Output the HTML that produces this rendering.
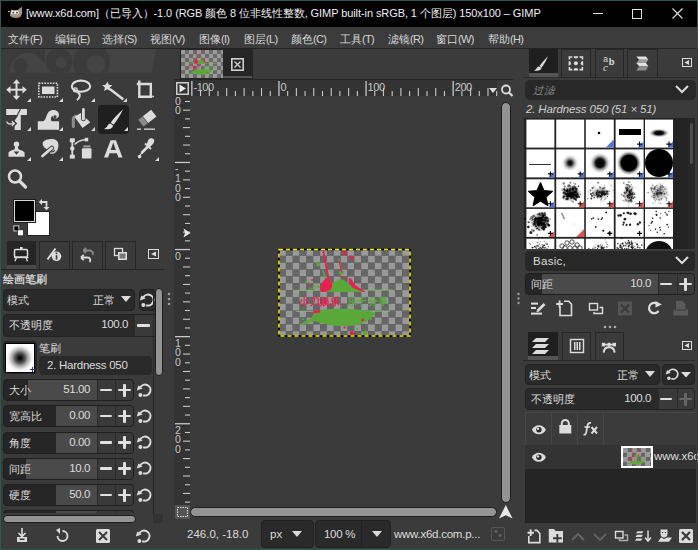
<!DOCTYPE html>
<html><head><meta charset="utf-8"><style>
*{margin:0;padding:0;box-sizing:border-box}
html,body{width:698px;height:550px;overflow:hidden;background:#3b3b3b;font-family:"Liberation Sans",sans-serif;color:#dcdcdc;font-size:12px}
div,svg{position:absolute}
.t{white-space:nowrap;line-height:1}
</style></head><body>
<div style="left:0px;top:0px;width:698px;height:550px;background:#2a5852"></div>
<div style="left:1px;top:1px;width:696px;height:548px;background:#3b3b3b"></div>
<div style="left:1px;top:1px;width:696px;height:26px;background:#000"></div>
<div style="left:1px;top:27px;width:696px;height:21px;background:#3c3c3c"></div>
<div style="left:1px;top:48px;width:696px;height:1px;background:#232323"></div>
<svg style="left:0px;top:0px;" width="30" height="27" viewBox="0 0 30 27"><path d="M10 14.5 L11.2 9.3 L13.3 10.3 L17.5 10 L21.8 6.8 L22.2 13 L20.5 16.8 L17 18 L12.5 17.6 L10 15.8 Z" fill="#a0968a"/><ellipse cx="13.2" cy="12.4" rx="2.2" ry="1.9" fill="#f0f0f0"/><ellipse cx="16.6" cy="12.4" rx="2.2" ry="1.9" fill="#f0f0f0"/><circle cx="13.4" cy="12.6" r="0.9" fill="#222"/><circle cx="17" cy="12.6" r="0.9" fill="#222"/><ellipse cx="8.9" cy="11.5" rx="1" ry="0.7" fill="#ccc"/><circle cx="18.3" cy="16.4" r="1.1" fill="#e07a20"/></svg>
<div class="t" style="left:26px;top:8px;font-size:11px;color:#f0f0f0;letter-spacing:-0.08px">[www.x6d.com]（已导入）-1.0 (RGB 颜色 8 位非线性整数, GIMP built-in sRGB, 1 个图层) 150x100 – GIMP</div>
<div style="left:593px;top:13px;width:10px;height:1px;background:#e0e0e0"></div>
<div style="left:632px;top:9px;width:10px;height:10px;border:1px solid #e0e0e0"></div>
<svg style="left:672px;top:8px;" width="11" height="11" viewBox="0 0 11 11"><path d="M0.5 0.5 L10.5 10.5 M10.5 0.5 L0.5 10.5" stroke="#e0e0e0" stroke-width="1.1"/></svg>
<div class="t" style="left:8px;top:33px;color:#d6d6d6"><span style="font-size:10.6px">文件</span><span style="font-size:11px;letter-spacing:-0.7px">(F)</span></div>
<div class="t" style="left:55px;top:33px;color:#d6d6d6"><span style="font-size:10.6px">编辑</span><span style="font-size:11px;letter-spacing:-0.7px">(E)</span></div>
<div class="t" style="left:102px;top:33px;color:#d6d6d6"><span style="font-size:10.6px">选择</span><span style="font-size:11px;letter-spacing:-0.7px">(S)</span></div>
<div class="t" style="left:150px;top:33px;color:#d6d6d6"><span style="font-size:10.6px">视图</span><span style="font-size:11px;letter-spacing:-0.7px">(V)</span></div>
<div class="t" style="left:199px;top:33px;color:#d6d6d6"><span style="font-size:10.6px">图像</span><span style="font-size:11px;letter-spacing:-0.7px">(I)</span></div>
<div class="t" style="left:244px;top:33px;color:#d6d6d6"><span style="font-size:10.6px">图层</span><span style="font-size:11px;letter-spacing:-0.7px">(L)</span></div>
<div class="t" style="left:291px;top:33px;color:#d6d6d6"><span style="font-size:10.6px">颜色</span><span style="font-size:11px;letter-spacing:-0.7px">(C)</span></div>
<div class="t" style="left:340px;top:33px;color:#d6d6d6"><span style="font-size:10.6px">工具</span><span style="font-size:11px;letter-spacing:-0.7px">(T)</span></div>
<div class="t" style="left:388px;top:33px;color:#d6d6d6"><span style="font-size:10.6px">滤镜</span><span style="font-size:11px;letter-spacing:-0.7px">(R)</span></div>
<div class="t" style="left:436px;top:33px;color:#d6d6d6"><span style="font-size:10.6px">窗口</span><span style="font-size:11px;letter-spacing:-0.7px">(W)</span></div>
<div class="t" style="left:488px;top:33px;color:#d6d6d6"><span style="font-size:10.6px">帮助</span><span style="font-size:11px;letter-spacing:-0.7px">(H)</span></div>
<svg style="left:0px;top:49px;" width="172" height="24" viewBox="0 0 172 24">
<defs><clipPath id="wb"><rect x="0" y="49" width="172" height="23.8"/></clipPath></defs>
<g clip-path="url(#wb)" transform="translate(0,-49)">
<path d="M45 49 L156.2 49 L151.6 73 L45 73 Z" fill="#444"/>
<path d="M9.5 73 C9.5 60 18 53 28 53 C37 53 45 60 48 73 Z" fill="#444"/>
<ellipse cx="20.6" cy="66" rx="6.8" ry="8" fill="#3b3b3b"/>
<circle cx="59" cy="62" r="13.3" fill="#3b3b3b"/><circle cx="61" cy="62.5" r="5.5" fill="#444"/>
<circle cx="91.5" cy="62" r="18.5" fill="#3b3b3b"/><circle cx="96" cy="64" r="9.3" fill="#444"/>
</g></svg>
<div style="left:98px;top:105px;width:31px;height:29px;background:#1f1f1f;border-radius:4px"></div>
<svg style="left:0;top:0" width="698" height="550" viewBox="0 0 698 550">
<g fill="#dcdcdc" stroke="none">
<rect x="9" y="88.7" width="15" height="2"/><rect x="15.5" y="82" width="2" height="15.5"/>
<path d="M6.2 89.7 L10.5 86 L10.5 93.4 Z M26.8 89.7 L22.5 86 L22.5 93.4 Z M16.5 79.3 L12.8 83.6 L20.2 83.6 Z M16.5 100.1 L12.8 95.8 L20.2 95.8 Z"/>
<path d="M27 102 L31 102 L31 98 Z" fill="#dcdcdc"/>
<rect x="42" y="86.5" width="12.5" height="7.5"/>
</g>
<rect x="38.8" y="83.2" width="18.6" height="13.8" fill="none" stroke="#dcdcdc" stroke-width="1.6" stroke-dasharray="1.6 1.2"/>
<path d="M59 102 L63 102 L63 98 Z" fill="#dcdcdc"/>
<ellipse cx="81" cy="86.2" rx="9.2" ry="5.6" fill="none" stroke="#dcdcdc" stroke-width="2.1"/>
<path d="M75 90.5 C78.5 92 80.5 94.5 79.5 97 C79 98.5 78 99.5 76.8 100" fill="none" stroke="#dcdcdc" stroke-width="2"/>
<circle cx="75.3" cy="89.8" r="1.9" fill="none" stroke="#dcdcdc" stroke-width="1.4"/>
<path d="M91 102 L95 102 L95 98 Z" fill="#dcdcdc"/>
<path d="M107.3 81.5 L108.8 84.8 L112.4 85.2 L109.7 87.6 L110.5 91.1 L107.3 89.3 L104.1 91.1 L104.9 87.6 L102.2 85.2 L105.8 84.8 Z" fill="#dcdcdc"/>
<path d="M110.5 89.5 L122.5 98.8" stroke="#dcdcdc" stroke-width="2.4" stroke-linecap="round"/>
<path d="M123 102 L127 102 L127 98 Z" fill="#dcdcdc"/>
<path d="M139.3 80.6 V96.7 H152" fill="none" stroke="#dcdcdc" stroke-width="2.4"/><circle cx="153" cy="96.5" r="0.9" fill="#dcdcdc"/>
<path d="M136.8 84 H150.8 V98" fill="none" stroke="#dcdcdc" stroke-width="2.4"/>
<rect x="6.2" y="109" width="20.7" height="6" fill="#dcdcdc"/>
<path d="M20.6 108.5 L14.6 121" stroke="#3b3b3b" stroke-width="1.1"/>
<path d="M20.8 111.5 L20.8 130 L14.6 130 L14.6 126.2 L17.2 123.5 L14.6 120.8 Z" fill="#dcdcdc"/>
<path d="M6.8 121.5 C7 124 9 124.2 13.5 123.6" fill="none" stroke="#dcdcdc" stroke-width="1.4"/>
<path d="M11.8 121.3 L14.3 123.6 L11.8 125.9" fill="none" stroke="#dcdcdc" stroke-width="1.4"/>
<path d="M27 131 L31 131 L31 127 Z" fill="#dcdcdc"/>
<path fill-rule="evenodd" d="M37.8 129.8 V121.3 H42.5 C44.5 121.3 45.5 119 46.5 116 C48 111.5 50.5 110 53.5 110 C57 110 59 112.5 59 115 C59 117.5 57 118.8 55 118.5 C53.5 118.3 52.5 117 52.6 115.7 C51 116.5 50.5 118.5 51.5 121.3 H59.1 V129.8 Z M55 115.2 A1.6 1.6 0 1 0 55.01 115.2 Z" fill="#dcdcdc"/>
<path d="M59 131 L63 131 L63 127 Z" fill="#dcdcdc"/>
<path d="M73.3 126.5 V119.5 C73.3 117.5 74.5 116.5 76.5 116" fill="none" stroke="#8c8c8c" stroke-width="3" stroke-linecap="round"/>
<path d="M74.7 117.1 L80.7 113 L90.3 122.2 L82.5 128.1 Z" fill="#dcdcdc"/>
<path d="M83.4 109.5 V119" stroke="#3b3b3b" stroke-width="4.6" stroke-linecap="round"/>
<path d="M83.4 109.5 V119" stroke="#dcdcdc" stroke-width="2.8" stroke-linecap="round"/>
<path d="M91 131 L95 131 L95 127 Z" fill="#dcdcdc"/>
<path d="M123 109.5 C118.5 113 114 118 110.8 122.6 L113.6 124.8 C117 120 120.5 115 123 109.5 Z" fill="#dcdcdc"/>
<path d="M110.5 123.5 C107 124 108 127.5 104 129 C109 130 113 128.5 113 125.5 Z" fill="#dcdcdc"/>
<path d="M124 131 L128 131 L128 127 Z" fill="#dcdcdc"/>
<g transform="translate(147.5 118) rotate(-38)"><rect x="-2.5" y="-4.3" width="10.5" height="8.6" fill="#dcdcdc"/><rect x="-8.5" y="-4.3" width="5.5" height="8.6" fill="#8a8a8a"/></g>
<rect x="137" y="128.5" width="4" height="1.3" fill="#dcdcdc"/><rect x="144" y="128.5" width="11" height="1.3" fill="#dcdcdc"/>
<circle cx="16.5" cy="144.2" r="2.7" fill="#dcdcdc"/>
<path d="M8.5 156.7 V153 C8.5 150.8 12.5 150.3 14.6 149.2 L15.2 146 H17.8 L18.4 149.2 C20.5 150.3 24.6 150.8 24.6 153 V156.7 Z" fill="#dcdcdc"/>
<path d="M13.8 151.6 H19.2 L16.5 154.8 Z" fill="#3b3b3b"/>
<path d="M27 161 L31 161 L31 157 Z" fill="#dcdcdc"/>
<path d="M43 142 C45.5 139 53 138 56.5 140.5 C59.5 143 58.8 149 56 152 C54 154.2 50.5 154.5 48.8 152.5 L47.5 149.5 C45.5 148.5 43.5 147 42.8 145 C42.5 144 42.5 143 43 142 Z" fill="#dcdcdc"/>
<path d="M49 150.5 C50.5 152.5 53.5 152.5 54.8 150" fill="none" stroke="#3b3b3b" stroke-width="1.3"/>
<path d="M42.5 156 L51.8 148" stroke="#3b3b3b" stroke-width="4.6" stroke-linecap="round"/>
<path d="M42.5 156 L51.8 148" stroke="#dcdcdc" stroke-width="2.8" stroke-linecap="round"/>
<path d="M59 161 L63 161 L63 157 Z" fill="#dcdcdc"/>
<rect x="71.4" y="140" width="1.8" height="17" fill="#dcdcdc"/>
<rect x="69.8" y="138.3" width="5" height="4" fill="#dcdcdc"/>
<circle cx="72.3" cy="148.5" r="2.2" fill="#dcdcdc"/>
<rect x="69.8" y="154.8" width="5" height="3.8" fill="#dcdcdc"/>
<path d="M74.5 144.5 C77.5 141.5 81 140 85 139.8" fill="none" stroke="#dcdcdc" stroke-width="1.5"/>
<rect x="84.8" y="137.8" width="3.4" height="3.6" fill="#dcdcdc"/>
<rect x="83.3" y="145.3" width="7.2" height="2.2" fill="#9a9a9a"/>
<rect x="81.9" y="148.3" width="9.6" height="10.1" rx="1" fill="#dcdcdc"/>
<path fill-rule="evenodd" d="M104 157.5 L110.6 140.3 L115.9 140.3 L122.5 157.5 L118.4 157.5 L116.9 153.2 L109.6 153.2 L108.1 157.5 Z M110.7 149.9 L115.8 149.9 L113.25 142.6 Z" fill="#dcdcdc"/>
<path d="M148.5 139.5 C150.5 137.5 154 138 154.2 140.5 C154.4 142 153.5 143.5 152 145 L149.5 147.5 L146.5 144.5 Z" fill="#dcdcdc"/>
<path d="M145 143.5 L151 149" stroke="#dcdcdc" stroke-width="1.8"/>
<path d="M148 146.5 L141.5 153" stroke="#dcdcdc" stroke-width="2.6"/>
<path d="M142 152.5 L140 155.5" stroke="#dcdcdc" stroke-width="1.3"/>
<circle cx="139.6" cy="156.6" r="1.8" fill="#dcdcdc"/>
<path d="M155 161 L159 161 L159 157 Z" fill="#dcdcdc"/>
<circle cx="15" cy="176.5" r="6" fill="none" stroke="#dcdcdc" stroke-width="2.5"/>
<path d="M19.5 181 L25.5 187" stroke="#dcdcdc" stroke-width="3.2" stroke-linecap="round"/>
</svg>
<div style="left:27px;top:211px;width:23px;height:25px;background:#fff;border:1px solid #222"></div>
<div style="left:13.3px;top:199.4px;width:22.3px;height:24px;background:#000;border:1px solid #1c1c1c;box-shadow:inset 0 0 0 1px #d8d8d8, inset 0 0 0 2px #000"></div>
<svg style="left:12px;top:224px;" width="13" height="13" viewBox="0 0 13 13"><rect x="1.8" y="1.9" width="5" height="5" fill="#000" stroke="#d0d0d0" stroke-width="1"/><rect x="5.5" y="5.8" width="6" height="6" fill="#fff" stroke="#222" stroke-width="0.8"/></svg>
<svg style="left:38px;top:198px;" width="13" height="14" viewBox="0 0 13 14"><path d="M3 4 H8.5 V10" fill="none" stroke="#dcdcdc" stroke-width="1.8"/><path d="M0.8 4 L4 1 L4 7 Z M8.5 12.2 L5.5 9 L11.5 9 Z" fill="#dcdcdc"/></svg>
<div style="left:1px;top:269px;width:163px;height:1px;background:#242424"></div>
<div style="left:7px;top:241px;width:29px;height:28px;background:#252525"></div>
<div style="left:7px;top:265px;width:29px;height:4px;background:#4a4a4a"></div>
<div style="left:39px;top:241px;width:31px;height:28px;border:1px solid #282828;border-bottom:none"></div>
<div style="left:72px;top:241px;width:31px;height:28px;border:1px solid #282828;border-bottom:none"></div>
<div style="left:105px;top:241px;width:31px;height:28px;border:1px solid #282828;border-bottom:none"></div>
<svg style="left:0px;top:230px;" width="170" height="40" viewBox="0 0 170 40">
<rect x="14.5" y="19.6" width="13" height="7.4" rx="1.2" fill="none" stroke="#dcdcdc" stroke-width="1.5"/>
<rect x="20" y="17" width="2.6" height="2.6" fill="#dcdcdc"/>
<path d="M14 27.6 H28.5" stroke="#dcdcdc" stroke-width="1.2"/>
<path d="M16.5 27.5 L15 31.3 M26 27.5 L27.5 31.3" stroke="#dcdcdc" stroke-width="1.3"/>
<path d="M47.5 29.5 L55.5 18.5" stroke="#dcdcdc" stroke-width="2"/>
<circle cx="56.5" cy="26.3" r="4.8" fill="#dcdcdc"/>
<rect x="55.7" y="25.2" width="1.7" height="4.3" fill="#3b3b3b"/><rect x="55.7" y="22.6" width="1.7" height="1.6" fill="#3b3b3b"/>
<path d="M83.5 20.5 H89.5 C92.5 20.5 93.5 23 92.5 25" fill="none" stroke="#8a8a8a" stroke-width="1.8"/>
<path d="M83.5 20.5 L86 18 M83.5 20.5 L86 23" fill="none" stroke="#8a8a8a" stroke-width="1.8"/>
<path d="M81 27.5 H87.5 C90.5 27.5 91 30.5 89.5 32" fill="none" stroke="#dcdcdc" stroke-width="1.8"/>
<path d="M81 27.5 L83.8 24.8 M81 27.5 L83.8 30.2" fill="none" stroke="#dcdcdc" stroke-width="1.8"/>
<rect x="114.5" y="18.5" width="8" height="7" fill="none" stroke="#dcdcdc" stroke-width="1.3"/>
<rect x="118" y="22" width="9" height="8" fill="#dcdcdc"/><rect x="119.5" y="23.5" width="6" height="5" fill="#777"/>
<rect x="148.5" y="19.5" width="10" height="9" fill="none" stroke="#dcdcdc" stroke-width="1"/>
<path d="M156 21.5 L151 24 L156 26.5 Z" fill="#dcdcdc"/>
</svg>
<div class="t" style="left:3px;top:274px;font-size:10.5px;font-weight:bold;color:#d0d0d0">绘画笔刷</div>
<div style="left:3px;top:289px;width:132px;height:22px;background:#2a2a2a;border:1px solid #222;border-radius:4px"></div>
<div class="t" style="left:7px;top:295.0px;font-size:10.5px;color:#dcdcdc">模式</div>
<div class="t" style="left:93px;top:295.0px;font-size:10.5px;color:#dcdcdc">正常</div>
<svg style="left:121px;top:296px;" width="11" height="7" viewBox="0 0 11 7"><path d="M0 0 H10 L5 6 Z" fill="#dcdcdc"/></svg>
<div style="left:139px;top:289px;width:17px;height:22px;background:#2a2a2a;border:1px solid #222;border-radius:4px"></div>
<svg style="left:139px;top:292px;" width="17" height="17" viewBox="0 0 17 17"><g transform="translate(0 0)"><path d="M4.2 5.4 A5.5 5.5 0 1 1 7.2 13.3" fill="none" stroke="#dcdcdc" stroke-width="2"/><path d="M0.8 8.6 L2.3 3.4 L6.6 6.6 Z" fill="#dcdcdc"/><circle cx="4.4" cy="12.9" r="2" fill="#dcdcdc"/></g></svg>
<div style="left:3px;top:314px;width:152px;height:23px;background:#2a2a2a;border:1px solid #222;border-radius:4px 0 0 4px"></div>
<div style="left:135px;top:315px;width:20px;height:21px;background:#3a3a3a"></div>
<div style="left:137px;top:324px;width:13px;height:2.6px;background:#e0e0e0;border-radius:1px"></div>
<div class="t" style="left:9px;top:320.0px;font-size:10.5px;color:#dcdcdc">不透明度</div>
<div class="t" style="right:570px;top:319px;font-size:11.5px;color:#dcdcdc;letter-spacing:-0.4px">100.0</div>
<div style="left:3.4px;top:340.6px;width:33.3px;height:33.2px;background:#262626;border-radius:4px"></div>
<div style="left:5px;top:342.5px;width:30px;height:30.3px;border:1px solid #000;background:radial-gradient(circle at 50% 50%, #000 0px, #111 1.5px, #555 5px, #aaa 8px, #eee 11.5px, #fff 14px)"></div>
<svg style="left:29px;top:366px;" width="7" height="7" viewBox="0 0 7 7"><path d="M1 3.5 H6 M3.5 1 V6" stroke="#2a3a90" stroke-width="1.1"/></svg>
<div class="t" style="left:39px;top:343.0px;font-size:10.5px;color:#dcdcdc">笔刷</div>
<div style="left:39px;top:356px;width:113px;height:19px;background:#2a2a2a;border-radius:4px"></div>
<div class="t" style="left:47px;top:360px;font-size:11.5px;color:#dcdcdc;letter-spacing:-0.25px">2. Hardness 050</div>
<div style="left:3px;top:379px;width:131px;height:22px;background:#262626;border:1px solid #1f1f1f;border-radius:4px;overflow:hidden"><div style="left:23.5px;top:0px;width:69.5px;height:22px;background:#4a4a4a"></div><div style="left:93px;top:0px;width:1px;height:22px;background:#2a2a2a"></div><div style="left:94px;top:0px;width:18px;height:22px;background:#3a3a3a"></div><div style="left:111px;top:0px;width:1px;height:22px;background:#2a2a2a"></div><div style="left:112px;top:0px;width:18px;height:22px;background:#3a3a3a"></div></div>
<div class="t" style="left:9px;top:385px;font-size:10.5px;color:#dcdcdc">大小</div>
<div class="t" style="right:608px;top:384px;font-size:11.5px;color:#dcdcdc;letter-spacing:-0.4px">51.00</div>
<div style="left:100px;top:388.7px;width:12px;height:2.6px;background:#e0e0e0;border-radius:1px"></div>
<div style="left:118px;top:388.7px;width:13px;height:2.6px;background:#e0e0e0;border-radius:1px"></div>
<div style="left:123.2px;top:383.5px;width:2.6px;height:13px;background:#e0e0e0;border-radius:1px"></div>
<svg style="left:136px;top:381.5px;" width="17" height="17" viewBox="0 0 17 17"><g transform="translate(0 0)"><path d="M4.2 5.4 A5.5 5.5 0 1 1 7.2 13.3" fill="none" stroke="#dcdcdc" stroke-width="2"/><path d="M0.8 8.6 L2.3 3.4 L6.6 6.6 Z" fill="#dcdcdc"/><circle cx="4.4" cy="12.9" r="2" fill="#dcdcdc"/></g></svg>
<div style="left:3px;top:405px;width:131px;height:22px;background:#262626;border:1px solid #1f1f1f;border-radius:4px;overflow:hidden"><div style="left:51.5px;top:0px;width:41.5px;height:22px;background:#4a4a4a"></div><div style="left:93px;top:0px;width:1px;height:22px;background:#2a2a2a"></div><div style="left:94px;top:0px;width:18px;height:22px;background:#3a3a3a"></div><div style="left:111px;top:0px;width:1px;height:22px;background:#2a2a2a"></div><div style="left:112px;top:0px;width:18px;height:22px;background:#3a3a3a"></div></div>
<div class="t" style="left:9px;top:411px;font-size:10.5px;color:#dcdcdc">宽高比</div>
<div class="t" style="right:608px;top:410px;font-size:11.5px;color:#dcdcdc;letter-spacing:-0.4px">0.00</div>
<div style="left:100px;top:414.7px;width:12px;height:2.6px;background:#e0e0e0;border-radius:1px"></div>
<div style="left:118px;top:414.7px;width:13px;height:2.6px;background:#e0e0e0;border-radius:1px"></div>
<div style="left:123.2px;top:409.5px;width:2.6px;height:13px;background:#e0e0e0;border-radius:1px"></div>
<svg style="left:136px;top:407.5px;" width="17" height="17" viewBox="0 0 17 17"><g transform="translate(0 0)"><path d="M4.2 5.4 A5.5 5.5 0 1 1 7.2 13.3" fill="none" stroke="#dcdcdc" stroke-width="2"/><path d="M0.8 8.6 L2.3 3.4 L6.6 6.6 Z" fill="#dcdcdc"/><circle cx="4.4" cy="12.9" r="2" fill="#dcdcdc"/></g></svg>
<div style="left:3px;top:431.5px;width:131px;height:22px;background:#262626;border:1px solid #1f1f1f;border-radius:4px;overflow:hidden"><div style="left:51.5px;top:0px;width:41.5px;height:22px;background:#4a4a4a"></div><div style="left:93px;top:0px;width:1px;height:22px;background:#2a2a2a"></div><div style="left:94px;top:0px;width:18px;height:22px;background:#3a3a3a"></div><div style="left:111px;top:0px;width:1px;height:22px;background:#2a2a2a"></div><div style="left:112px;top:0px;width:18px;height:22px;background:#3a3a3a"></div></div>
<div class="t" style="left:9px;top:437.5px;font-size:10.5px;color:#dcdcdc">角度</div>
<div class="t" style="right:608px;top:436.5px;font-size:11.5px;color:#dcdcdc;letter-spacing:-0.4px">0.00</div>
<div style="left:100px;top:441.2px;width:12px;height:2.6px;background:#e0e0e0;border-radius:1px"></div>
<div style="left:118px;top:441.2px;width:13px;height:2.6px;background:#e0e0e0;border-radius:1px"></div>
<div style="left:123.2px;top:436.0px;width:2.6px;height:13px;background:#e0e0e0;border-radius:1px"></div>
<svg style="left:136px;top:434.0px;" width="17" height="17" viewBox="0 0 17 17"><g transform="translate(0 0)"><path d="M4.2 5.4 A5.5 5.5 0 1 1 7.2 13.3" fill="none" stroke="#dcdcdc" stroke-width="2"/><path d="M0.8 8.6 L2.3 3.4 L6.6 6.6 Z" fill="#dcdcdc"/><circle cx="4.4" cy="12.9" r="2" fill="#dcdcdc"/></g></svg>
<div style="left:3px;top:457.7px;width:131px;height:22px;background:#262626;border:1px solid #1f1f1f;border-radius:4px;overflow:hidden"><div style="left:21.6px;top:0px;width:71.4px;height:22px;background:#4a4a4a"></div><div style="left:93px;top:0px;width:1px;height:22px;background:#2a2a2a"></div><div style="left:94px;top:0px;width:18px;height:22px;background:#3a3a3a"></div><div style="left:111px;top:0px;width:1px;height:22px;background:#2a2a2a"></div><div style="left:112px;top:0px;width:18px;height:22px;background:#3a3a3a"></div></div>
<div class="t" style="left:9px;top:463.7px;font-size:10.5px;color:#dcdcdc">间距</div>
<div class="t" style="right:608px;top:462.7px;font-size:11.5px;color:#dcdcdc;letter-spacing:-0.4px">10.0</div>
<div style="left:100px;top:467.4px;width:12px;height:2.6px;background:#e0e0e0;border-radius:1px"></div>
<div style="left:118px;top:467.4px;width:13px;height:2.6px;background:#e0e0e0;border-radius:1px"></div>
<div style="left:123.2px;top:462.2px;width:2.6px;height:13px;background:#e0e0e0;border-radius:1px"></div>
<svg style="left:136px;top:460.2px;" width="17" height="17" viewBox="0 0 17 17"><g transform="translate(0 0)"><path d="M4.2 5.4 A5.5 5.5 0 1 1 7.2 13.3" fill="none" stroke="#dcdcdc" stroke-width="2"/><path d="M0.8 8.6 L2.3 3.4 L6.6 6.6 Z" fill="#dcdcdc"/><circle cx="4.4" cy="12.9" r="2" fill="#dcdcdc"/></g></svg>
<div style="left:3px;top:484px;width:131px;height:22px;background:#262626;border:1px solid #1f1f1f;border-radius:4px;overflow:hidden"><div style="left:51.5px;top:0px;width:41.5px;height:22px;background:#4a4a4a"></div><div style="left:93px;top:0px;width:1px;height:22px;background:#2a2a2a"></div><div style="left:94px;top:0px;width:18px;height:22px;background:#3a3a3a"></div><div style="left:111px;top:0px;width:1px;height:22px;background:#2a2a2a"></div><div style="left:112px;top:0px;width:18px;height:22px;background:#3a3a3a"></div></div>
<div class="t" style="left:9px;top:490px;font-size:10.5px;color:#dcdcdc">硬度</div>
<div class="t" style="right:608px;top:489px;font-size:11.5px;color:#dcdcdc;letter-spacing:-0.4px">50.0</div>
<div style="left:100px;top:493.7px;width:12px;height:2.6px;background:#e0e0e0;border-radius:1px"></div>
<div style="left:118px;top:493.7px;width:13px;height:2.6px;background:#e0e0e0;border-radius:1px"></div>
<div style="left:123.2px;top:488.5px;width:2.6px;height:13px;background:#e0e0e0;border-radius:1px"></div>
<svg style="left:136px;top:486.5px;" width="17" height="17" viewBox="0 0 17 17"><g transform="translate(0 0)"><path d="M4.2 5.4 A5.5 5.5 0 1 1 7.2 13.3" fill="none" stroke="#dcdcdc" stroke-width="2"/><path d="M0.8 8.6 L2.3 3.4 L6.6 6.6 Z" fill="#dcdcdc"/><circle cx="4.4" cy="12.9" r="2" fill="#dcdcdc"/></g></svg>
<div style="left:3px;top:510px;width:131px;height:5px;background:#262626;border:1px solid #1f1f1f;border-radius:4px;overflow:hidden;border-bottom:none;border-radius:4px 4px 0 0"><div style="left:51.5px;top:0px;width:41.5px;height:5px;background:#4a4a4a"></div><div style="left:93px;top:0px;width:1px;height:5px;background:#2a2a2a"></div><div style="left:94px;top:0px;width:18px;height:5px;background:#3a3a3a"></div><div style="left:111px;top:0px;width:1px;height:5px;background:#2a2a2a"></div><div style="left:112px;top:0px;width:18px;height:5px;background:#3a3a3a"></div></div>
<div style="left:1px;top:513px;width:152px;height:12px;background:#3b3b3b"></div>
<div style="left:3px;top:514.5px;width:133px;height:8.5px;background:#939393;border:1.5px solid #1c1c1c;border-radius:4.5px"></div>
<div style="left:153px;top:514px;width:10px;height:9px;background:#333"></div>
<div style="left:153px;top:289px;width:1px;height:225px;background:#262626"></div>
<div style="left:154.5px;top:288px;width:8.5px;height:88px;background:#939393;border:1.5px solid #1c1c1c;border-radius:4.5px"></div>
<svg style="left:166px;top:292px;" width="6" height="14" viewBox="0 0 6 14"><circle cx="3" cy="2" r="1.3" fill="#999"/><circle cx="3" cy="7" r="1.3" fill="#999"/><circle cx="3" cy="12" r="1.3" fill="#999"/></svg>
<svg style="left:0px;top:525px;" width="172" height="24" viewBox="0 0 172 24">
<path d="M22 3 V11 M18.5 8 L22 11.5 L25.5 8" fill="none" stroke="#dcdcdc" stroke-width="1.6"/>
<rect x="17" y="12" width="10" height="5" fill="#dcdcdc"/><rect x="19.5" y="13.5" width="5" height="1.5" fill="#3b3b3b"/>
<path d="M62.5 6 A5 5 0 1 1 57.5 11" fill="none" stroke="#dcdcdc" stroke-width="1.8"/><path d="M56 5 L60 3 L60 9 Z" fill="#dcdcdc"/>
<rect x="96" y="4" width="14" height="14" rx="1.5" fill="#dcdcdc"/><path d="M99 7 L107 15 M107 7 L99 15" stroke="#3b3b3b" stroke-width="2"/>
<g transform="translate(135 3)"><path d="M4.2 5.4 A5.5 5.5 0 1 1 7.2 13.3" fill="none" stroke="#dcdcdc" stroke-width="2"/><path d="M0.8 8.6 L2.3 3.4 L6.6 6.6 Z" fill="#dcdcdc"/><circle cx="4.4" cy="12.9" r="2" fill="#dcdcdc"/></g>
</svg>
<div style="left:174px;top:49px;width:349px;height:30px;background:#3b3b3b"></div>
<div style="left:180px;top:49px;width:73px;height:30px;background:#262626;border-left:1px solid #1e1e1e"></div>
<div style="left:181px;top:75.8px;width:71px;height:2.4px;background:#555"></div>
<svg style="left:231px;top:58px;" width="13" height="13" viewBox="0 0 13 13"><rect x="0.8" y="0.8" width="11.4" height="11.4" fill="none" stroke="#d0d0d0" stroke-width="1.6"/><path d="M3.5 3.5 L9.5 9.5 M9.5 3.5 L3.5 9.5" stroke="#d0d0d0" stroke-width="1.4"/></svg>
<div style="left:174px;top:79px;width:339px;height:1px;background:#262626"></div>
<div style="left:190px;top:96px;width:310px;height:409px;background:#3b3b3b"></div>
<div style="left:174px;top:80px;width:16px;height:425px;background:#333"></div>
<svg style="left:0;top:0" width="698" height="550" viewBox="0 0 698 550"><rect x="185" y="100.93" width="5" height="1.1" fill="#c8c8c8"/><rect x="183" y="109.64" width="7" height="1.1" fill="#c8c8c8"/><rect x="185" y="118.35" width="5" height="1.1" fill="#c8c8c8"/><rect x="183" y="127.06" width="7" height="1.1" fill="#c8c8c8"/><rect x="185" y="135.77" width="5" height="1.1" fill="#c8c8c8"/><rect x="183" y="144.48" width="7" height="1.1" fill="#c8c8c8"/><rect x="185" y="153.19" width="5" height="1.1" fill="#c8c8c8"/><rect x="175" y="161.80" width="15" height="1.3" fill="#c8c8c8"/><rect x="185" y="170.61" width="5" height="1.1" fill="#c8c8c8"/><rect x="183" y="179.32" width="7" height="1.1" fill="#c8c8c8"/><rect x="185" y="188.03" width="5" height="1.1" fill="#c8c8c8"/><rect x="183" y="196.74" width="7" height="1.1" fill="#c8c8c8"/><rect x="185" y="205.45" width="5" height="1.1" fill="#c8c8c8"/><rect x="183" y="214.16" width="7" height="1.1" fill="#c8c8c8"/><rect x="185" y="222.87" width="5" height="1.1" fill="#c8c8c8"/><rect x="183" y="231.58" width="7" height="1.1" fill="#c8c8c8"/><rect x="185" y="240.29" width="5" height="1.1" fill="#c8c8c8"/><rect x="175" y="248.90" width="15" height="1.3" fill="#c8c8c8"/><rect x="185" y="257.71" width="5" height="1.1" fill="#c8c8c8"/><rect x="183" y="266.42" width="7" height="1.1" fill="#c8c8c8"/><rect x="185" y="275.13" width="5" height="1.1" fill="#c8c8c8"/><rect x="183" y="283.84" width="7" height="1.1" fill="#c8c8c8"/><rect x="185" y="292.55" width="5" height="1.1" fill="#c8c8c8"/><rect x="183" y="301.26" width="7" height="1.1" fill="#c8c8c8"/><rect x="185" y="309.97" width="5" height="1.1" fill="#c8c8c8"/><rect x="183" y="318.68" width="7" height="1.1" fill="#c8c8c8"/><rect x="185" y="327.39" width="5" height="1.1" fill="#c8c8c8"/><rect x="175" y="336.00" width="15" height="1.3" fill="#c8c8c8"/><rect x="185" y="344.81" width="5" height="1.1" fill="#c8c8c8"/><rect x="183" y="353.52" width="7" height="1.1" fill="#c8c8c8"/><rect x="185" y="362.23" width="5" height="1.1" fill="#c8c8c8"/><rect x="183" y="370.94" width="7" height="1.1" fill="#c8c8c8"/><rect x="185" y="379.65" width="5" height="1.1" fill="#c8c8c8"/><rect x="183" y="388.36" width="7" height="1.1" fill="#c8c8c8"/><rect x="185" y="397.07" width="5" height="1.1" fill="#c8c8c8"/><rect x="183" y="405.78" width="7" height="1.1" fill="#c8c8c8"/><rect x="185" y="414.49" width="5" height="1.1" fill="#c8c8c8"/><rect x="175" y="423.10" width="15" height="1.3" fill="#c8c8c8"/><rect x="185" y="431.91" width="5" height="1.1" fill="#c8c8c8"/><rect x="183" y="440.62" width="7" height="1.1" fill="#c8c8c8"/><rect x="185" y="449.33" width="5" height="1.1" fill="#c8c8c8"/><rect x="183" y="458.04" width="7" height="1.1" fill="#c8c8c8"/><rect x="185" y="466.75" width="5" height="1.1" fill="#c8c8c8"/><rect x="183" y="475.46" width="7" height="1.1" fill="#c8c8c8"/><rect x="185" y="484.17" width="5" height="1.1" fill="#c8c8c8"/><rect x="183" y="492.88" width="7" height="1.1" fill="#c8c8c8"/><rect x="185" y="501.59" width="5" height="1.1" fill="#c8c8c8"/></svg>
<div class="t" style="left:175px;top:76.30000000000001px;font-size:10.5px;color:#c8c8c8">-</div>
<div class="t" style="left:175px;top:85.95000000000002px;font-size:10.5px;color:#c8c8c8">2</div>
<div class="t" style="left:175px;top:95.60000000000001px;font-size:10.5px;color:#c8c8c8">0</div>
<div class="t" style="left:175px;top:105.25000000000001px;font-size:10.5px;color:#c8c8c8">0</div>
<div class="t" style="left:175px;top:163.4px;font-size:10.5px;color:#c8c8c8">-</div>
<div class="t" style="left:175px;top:173.05px;font-size:10.5px;color:#c8c8c8">1</div>
<div class="t" style="left:175px;top:182.70000000000002px;font-size:10.5px;color:#c8c8c8">0</div>
<div class="t" style="left:175px;top:192.35000000000002px;font-size:10.5px;color:#c8c8c8">0</div>
<div class="t" style="left:175px;top:250.5px;font-size:10.5px;color:#c8c8c8">0</div>
<div class="t" style="left:175px;top:337.6px;font-size:10.5px;color:#c8c8c8">1</div>
<div class="t" style="left:175px;top:347.25px;font-size:10.5px;color:#c8c8c8">0</div>
<div class="t" style="left:175px;top:356.90000000000003px;font-size:10.5px;color:#c8c8c8">0</div>
<div class="t" style="left:175px;top:424.7px;font-size:10.5px;color:#c8c8c8">2</div>
<div class="t" style="left:175px;top:434.34999999999997px;font-size:10.5px;color:#c8c8c8">0</div>
<div class="t" style="left:175px;top:444.0px;font-size:10.5px;color:#c8c8c8">0</div>
<svg style="left:182px;top:228px;" width="9" height="10" viewBox="0 0 9 10"><path d="M1.5 0.5 L8.5 5 L1.5 9.5 L3 5 Z" fill="#e8e8e8"/></svg>
<div style="left:174px;top:80px;width:323px;height:16px;background:#333"></div>
<svg style="left:0;top:0" width="698" height="550" viewBox="0 0 698 550"><rect x="191.20" y="81" width="1.3" height="15" fill="#c8c8c8"/><rect x="200.01" y="91" width="1.1" height="5" fill="#c8c8c8"/><rect x="208.72" y="88" width="1.1" height="8" fill="#c8c8c8"/><rect x="217.43" y="91" width="1.1" height="5" fill="#c8c8c8"/><rect x="226.14" y="88" width="1.1" height="8" fill="#c8c8c8"/><rect x="234.85" y="91" width="1.1" height="5" fill="#c8c8c8"/><rect x="243.56" y="88" width="1.1" height="8" fill="#c8c8c8"/><rect x="252.27" y="91" width="1.1" height="5" fill="#c8c8c8"/><rect x="260.98" y="88" width="1.1" height="8" fill="#c8c8c8"/><rect x="269.69" y="91" width="1.1" height="5" fill="#c8c8c8"/><rect x="278.30" y="81" width="1.3" height="15" fill="#c8c8c8"/><rect x="287.11" y="91" width="1.1" height="5" fill="#c8c8c8"/><rect x="295.82" y="88" width="1.1" height="8" fill="#c8c8c8"/><rect x="304.53" y="91" width="1.1" height="5" fill="#c8c8c8"/><rect x="313.24" y="88" width="1.1" height="8" fill="#c8c8c8"/><rect x="321.95" y="91" width="1.1" height="5" fill="#c8c8c8"/><rect x="330.66" y="88" width="1.1" height="8" fill="#c8c8c8"/><rect x="339.37" y="91" width="1.1" height="5" fill="#c8c8c8"/><rect x="348.08" y="88" width="1.1" height="8" fill="#c8c8c8"/><rect x="356.79" y="91" width="1.1" height="5" fill="#c8c8c8"/><rect x="365.40" y="81" width="1.3" height="15" fill="#c8c8c8"/><rect x="374.21" y="91" width="1.1" height="5" fill="#c8c8c8"/><rect x="382.92" y="88" width="1.1" height="8" fill="#c8c8c8"/><rect x="391.63" y="91" width="1.1" height="5" fill="#c8c8c8"/><rect x="400.34" y="88" width="1.1" height="8" fill="#c8c8c8"/><rect x="409.05" y="91" width="1.1" height="5" fill="#c8c8c8"/><rect x="417.76" y="88" width="1.1" height="8" fill="#c8c8c8"/><rect x="426.47" y="91" width="1.1" height="5" fill="#c8c8c8"/><rect x="435.18" y="88" width="1.1" height="8" fill="#c8c8c8"/><rect x="443.89" y="91" width="1.1" height="5" fill="#c8c8c8"/><rect x="452.50" y="81" width="1.3" height="15" fill="#c8c8c8"/><rect x="461.31" y="91" width="1.1" height="5" fill="#c8c8c8"/><rect x="470.02" y="88" width="1.1" height="8" fill="#c8c8c8"/><rect x="478.73" y="91" width="1.1" height="5" fill="#c8c8c8"/><rect x="487.44" y="88" width="1.1" height="8" fill="#c8c8c8"/><rect x="496.15" y="91" width="1.1" height="5" fill="#c8c8c8"/></svg>
<div class="t" style="left:193.39999999999998px;top:82px;font-size:11px;color:#c8c8c8;letter-spacing:-0.4px">-100</div>
<div class="t" style="left:280.5px;top:82px;font-size:11px;color:#c8c8c8;letter-spacing:-0.4px">0</div>
<div class="t" style="left:367.6px;top:82px;font-size:11px;color:#c8c8c8;letter-spacing:-0.4px">100</div>
<div class="t" style="left:454.7px;top:82px;font-size:11px;color:#c8c8c8;letter-spacing:-0.4px">200</div>
<svg style="left:176px;top:82px;" width="13" height="13" viewBox="0 0 13 13"><rect x="0.75" y="0.75" width="11.5" height="11.5" fill="none" stroke="#cfcfcf" stroke-width="1.5"/><path d="M3.5 2.5 L10 6.5 L3.5 10.5 Z" fill="#e8e8e8"/></svg>
<svg style="left:486px;top:84px;" width="34" height="14" viewBox="0 0 34 14"><path d="M3 4 H11 L7 9 Z" fill="#dcdcdc"/><circle cx="20" cy="5.5" r="4" fill="none" stroke="#dcdcdc" stroke-width="1.8"/><path d="M23 8.5 L26.5 12" stroke="#dcdcdc" stroke-width="2.2"/></svg>
<svg style="left:278.9px;top:249.3px;" width="131" height="87" viewBox="0 0 131 87"><rect x="0.00" y="0.00" width="6.90" height="6.90" fill="#999999"/><rect x="0.00" y="6.85" width="6.90" height="6.90" fill="#666666"/><rect x="0.00" y="13.70" width="6.90" height="6.90" fill="#999999"/><rect x="0.00" y="20.55" width="6.90" height="6.90" fill="#666666"/><rect x="0.00" y="27.40" width="6.90" height="6.90" fill="#999999"/><rect x="0.00" y="34.25" width="6.90" height="6.90" fill="#666666"/><rect x="0.00" y="41.10" width="6.90" height="6.90" fill="#999999"/><rect x="0.00" y="47.95" width="6.90" height="6.90" fill="#666666"/><rect x="0.00" y="54.80" width="6.90" height="6.90" fill="#999999"/><rect x="0.00" y="61.65" width="6.90" height="6.90" fill="#666666"/><rect x="0.00" y="68.50" width="6.90" height="6.90" fill="#999999"/><rect x="0.00" y="75.35" width="6.90" height="6.90" fill="#666666"/><rect x="0.00" y="82.20" width="6.90" height="6.90" fill="#999999"/><rect x="6.85" y="0.00" width="6.90" height="6.90" fill="#666666"/><rect x="6.85" y="6.85" width="6.90" height="6.90" fill="#999999"/><rect x="6.85" y="13.70" width="6.90" height="6.90" fill="#666666"/><rect x="6.85" y="20.55" width="6.90" height="6.90" fill="#999999"/><rect x="6.85" y="27.40" width="6.90" height="6.90" fill="#666666"/><rect x="6.85" y="34.25" width="6.90" height="6.90" fill="#999999"/><rect x="6.85" y="41.10" width="6.90" height="6.90" fill="#666666"/><rect x="6.85" y="47.95" width="6.90" height="6.90" fill="#999999"/><rect x="6.85" y="54.80" width="6.90" height="6.90" fill="#666666"/><rect x="6.85" y="61.65" width="6.90" height="6.90" fill="#999999"/><rect x="6.85" y="68.50" width="6.90" height="6.90" fill="#666666"/><rect x="6.85" y="75.35" width="6.90" height="6.90" fill="#999999"/><rect x="6.85" y="82.20" width="6.90" height="6.90" fill="#666666"/><rect x="13.70" y="0.00" width="6.90" height="6.90" fill="#999999"/><rect x="13.70" y="6.85" width="6.90" height="6.90" fill="#666666"/><rect x="13.70" y="13.70" width="6.90" height="6.90" fill="#999999"/><rect x="13.70" y="20.55" width="6.90" height="6.90" fill="#666666"/><rect x="13.70" y="27.40" width="6.90" height="6.90" fill="#999999"/><rect x="13.70" y="34.25" width="6.90" height="6.90" fill="#666666"/><rect x="13.70" y="41.10" width="6.90" height="6.90" fill="#999999"/><rect x="13.70" y="47.95" width="6.90" height="6.90" fill="#666666"/><rect x="13.70" y="54.80" width="6.90" height="6.90" fill="#999999"/><rect x="13.70" y="61.65" width="6.90" height="6.90" fill="#666666"/><rect x="13.70" y="68.50" width="6.90" height="6.90" fill="#999999"/><rect x="13.70" y="75.35" width="6.90" height="6.90" fill="#666666"/><rect x="13.70" y="82.20" width="6.90" height="6.90" fill="#999999"/><rect x="20.55" y="0.00" width="6.90" height="6.90" fill="#666666"/><rect x="20.55" y="6.85" width="6.90" height="6.90" fill="#999999"/><rect x="20.55" y="13.70" width="6.90" height="6.90" fill="#666666"/><rect x="20.55" y="20.55" width="6.90" height="6.90" fill="#999999"/><rect x="20.55" y="27.40" width="6.90" height="6.90" fill="#666666"/><rect x="20.55" y="34.25" width="6.90" height="6.90" fill="#999999"/><rect x="20.55" y="41.10" width="6.90" height="6.90" fill="#666666"/><rect x="20.55" y="47.95" width="6.90" height="6.90" fill="#999999"/><rect x="20.55" y="54.80" width="6.90" height="6.90" fill="#666666"/><rect x="20.55" y="61.65" width="6.90" height="6.90" fill="#999999"/><rect x="20.55" y="68.50" width="6.90" height="6.90" fill="#666666"/><rect x="20.55" y="75.35" width="6.90" height="6.90" fill="#999999"/><rect x="20.55" y="82.20" width="6.90" height="6.90" fill="#666666"/><rect x="27.40" y="0.00" width="6.90" height="6.90" fill="#999999"/><rect x="27.40" y="6.85" width="6.90" height="6.90" fill="#666666"/><rect x="27.40" y="13.70" width="6.90" height="6.90" fill="#999999"/><rect x="27.40" y="20.55" width="6.90" height="6.90" fill="#666666"/><rect x="27.40" y="27.40" width="6.90" height="6.90" fill="#999999"/><rect x="27.40" y="34.25" width="6.90" height="6.90" fill="#666666"/><rect x="27.40" y="41.10" width="6.90" height="6.90" fill="#999999"/><rect x="27.40" y="47.95" width="6.90" height="6.90" fill="#666666"/><rect x="27.40" y="54.80" width="6.90" height="6.90" fill="#999999"/><rect x="27.40" y="61.65" width="6.90" height="6.90" fill="#666666"/><rect x="27.40" y="68.50" width="6.90" height="6.90" fill="#999999"/><rect x="27.40" y="75.35" width="6.90" height="6.90" fill="#666666"/><rect x="27.40" y="82.20" width="6.90" height="6.90" fill="#999999"/><rect x="34.25" y="0.00" width="6.90" height="6.90" fill="#666666"/><rect x="34.25" y="6.85" width="6.90" height="6.90" fill="#999999"/><rect x="34.25" y="13.70" width="6.90" height="6.90" fill="#666666"/><rect x="34.25" y="20.55" width="6.90" height="6.90" fill="#999999"/><rect x="34.25" y="27.40" width="6.90" height="6.90" fill="#666666"/><rect x="34.25" y="34.25" width="6.90" height="6.90" fill="#999999"/><rect x="34.25" y="41.10" width="6.90" height="6.90" fill="#666666"/><rect x="34.25" y="47.95" width="6.90" height="6.90" fill="#999999"/><rect x="34.25" y="54.80" width="6.90" height="6.90" fill="#666666"/><rect x="34.25" y="61.65" width="6.90" height="6.90" fill="#999999"/><rect x="34.25" y="68.50" width="6.90" height="6.90" fill="#666666"/><rect x="34.25" y="75.35" width="6.90" height="6.90" fill="#999999"/><rect x="34.25" y="82.20" width="6.90" height="6.90" fill="#666666"/><rect x="41.10" y="0.00" width="6.90" height="6.90" fill="#999999"/><rect x="41.10" y="6.85" width="6.90" height="6.90" fill="#666666"/><rect x="41.10" y="13.70" width="6.90" height="6.90" fill="#999999"/><rect x="41.10" y="20.55" width="6.90" height="6.90" fill="#666666"/><rect x="41.10" y="27.40" width="6.90" height="6.90" fill="#999999"/><rect x="41.10" y="34.25" width="6.90" height="6.90" fill="#666666"/><rect x="41.10" y="41.10" width="6.90" height="6.90" fill="#999999"/><rect x="41.10" y="47.95" width="6.90" height="6.90" fill="#666666"/><rect x="41.10" y="54.80" width="6.90" height="6.90" fill="#999999"/><rect x="41.10" y="61.65" width="6.90" height="6.90" fill="#666666"/><rect x="41.10" y="68.50" width="6.90" height="6.90" fill="#999999"/><rect x="41.10" y="75.35" width="6.90" height="6.90" fill="#666666"/><rect x="41.10" y="82.20" width="6.90" height="6.90" fill="#999999"/><rect x="47.95" y="0.00" width="6.90" height="6.90" fill="#666666"/><rect x="47.95" y="6.85" width="6.90" height="6.90" fill="#999999"/><rect x="47.95" y="13.70" width="6.90" height="6.90" fill="#666666"/><rect x="47.95" y="20.55" width="6.90" height="6.90" fill="#999999"/><rect x="47.95" y="27.40" width="6.90" height="6.90" fill="#666666"/><rect x="47.95" y="34.25" width="6.90" height="6.90" fill="#999999"/><rect x="47.95" y="41.10" width="6.90" height="6.90" fill="#666666"/><rect x="47.95" y="47.95" width="6.90" height="6.90" fill="#999999"/><rect x="47.95" y="54.80" width="6.90" height="6.90" fill="#666666"/><rect x="47.95" y="61.65" width="6.90" height="6.90" fill="#999999"/><rect x="47.95" y="68.50" width="6.90" height="6.90" fill="#666666"/><rect x="47.95" y="75.35" width="6.90" height="6.90" fill="#999999"/><rect x="47.95" y="82.20" width="6.90" height="6.90" fill="#666666"/><rect x="54.80" y="0.00" width="6.90" height="6.90" fill="#999999"/><rect x="54.80" y="6.85" width="6.90" height="6.90" fill="#666666"/><rect x="54.80" y="13.70" width="6.90" height="6.90" fill="#999999"/><rect x="54.80" y="20.55" width="6.90" height="6.90" fill="#666666"/><rect x="54.80" y="27.40" width="6.90" height="6.90" fill="#999999"/><rect x="54.80" y="34.25" width="6.90" height="6.90" fill="#666666"/><rect x="54.80" y="41.10" width="6.90" height="6.90" fill="#999999"/><rect x="54.80" y="47.95" width="6.90" height="6.90" fill="#666666"/><rect x="54.80" y="54.80" width="6.90" height="6.90" fill="#999999"/><rect x="54.80" y="61.65" width="6.90" height="6.90" fill="#666666"/><rect x="54.80" y="68.50" width="6.90" height="6.90" fill="#999999"/><rect x="54.80" y="75.35" width="6.90" height="6.90" fill="#666666"/><rect x="54.80" y="82.20" width="6.90" height="6.90" fill="#999999"/><rect x="61.65" y="0.00" width="6.90" height="6.90" fill="#666666"/><rect x="61.65" y="6.85" width="6.90" height="6.90" fill="#999999"/><rect x="61.65" y="13.70" width="6.90" height="6.90" fill="#666666"/><rect x="61.65" y="20.55" width="6.90" height="6.90" fill="#999999"/><rect x="61.65" y="27.40" width="6.90" height="6.90" fill="#666666"/><rect x="61.65" y="34.25" width="6.90" height="6.90" fill="#999999"/><rect x="61.65" y="41.10" width="6.90" height="6.90" fill="#666666"/><rect x="61.65" y="47.95" width="6.90" height="6.90" fill="#999999"/><rect x="61.65" y="54.80" width="6.90" height="6.90" fill="#666666"/><rect x="61.65" y="61.65" width="6.90" height="6.90" fill="#999999"/><rect x="61.65" y="68.50" width="6.90" height="6.90" fill="#666666"/><rect x="61.65" y="75.35" width="6.90" height="6.90" fill="#999999"/><rect x="61.65" y="82.20" width="6.90" height="6.90" fill="#666666"/><rect x="68.50" y="0.00" width="6.90" height="6.90" fill="#999999"/><rect x="68.50" y="6.85" width="6.90" height="6.90" fill="#666666"/><rect x="68.50" y="13.70" width="6.90" height="6.90" fill="#999999"/><rect x="68.50" y="20.55" width="6.90" height="6.90" fill="#666666"/><rect x="68.50" y="27.40" width="6.90" height="6.90" fill="#999999"/><rect x="68.50" y="34.25" width="6.90" height="6.90" fill="#666666"/><rect x="68.50" y="41.10" width="6.90" height="6.90" fill="#999999"/><rect x="68.50" y="47.95" width="6.90" height="6.90" fill="#666666"/><rect x="68.50" y="54.80" width="6.90" height="6.90" fill="#999999"/><rect x="68.50" y="61.65" width="6.90" height="6.90" fill="#666666"/><rect x="68.50" y="68.50" width="6.90" height="6.90" fill="#999999"/><rect x="68.50" y="75.35" width="6.90" height="6.90" fill="#666666"/><rect x="68.50" y="82.20" width="6.90" height="6.90" fill="#999999"/><rect x="75.35" y="0.00" width="6.90" height="6.90" fill="#666666"/><rect x="75.35" y="6.85" width="6.90" height="6.90" fill="#999999"/><rect x="75.35" y="13.70" width="6.90" height="6.90" fill="#666666"/><rect x="75.35" y="20.55" width="6.90" height="6.90" fill="#999999"/><rect x="75.35" y="27.40" width="6.90" height="6.90" fill="#666666"/><rect x="75.35" y="34.25" width="6.90" height="6.90" fill="#999999"/><rect x="75.35" y="41.10" width="6.90" height="6.90" fill="#666666"/><rect x="75.35" y="47.95" width="6.90" height="6.90" fill="#999999"/><rect x="75.35" y="54.80" width="6.90" height="6.90" fill="#666666"/><rect x="75.35" y="61.65" width="6.90" height="6.90" fill="#999999"/><rect x="75.35" y="68.50" width="6.90" height="6.90" fill="#666666"/><rect x="75.35" y="75.35" width="6.90" height="6.90" fill="#999999"/><rect x="75.35" y="82.20" width="6.90" height="6.90" fill="#666666"/><rect x="82.20" y="0.00" width="6.90" height="6.90" fill="#999999"/><rect x="82.20" y="6.85" width="6.90" height="6.90" fill="#666666"/><rect x="82.20" y="13.70" width="6.90" height="6.90" fill="#999999"/><rect x="82.20" y="20.55" width="6.90" height="6.90" fill="#666666"/><rect x="82.20" y="27.40" width="6.90" height="6.90" fill="#999999"/><rect x="82.20" y="34.25" width="6.90" height="6.90" fill="#666666"/><rect x="82.20" y="41.10" width="6.90" height="6.90" fill="#999999"/><rect x="82.20" y="47.95" width="6.90" height="6.90" fill="#666666"/><rect x="82.20" y="54.80" width="6.90" height="6.90" fill="#999999"/><rect x="82.20" y="61.65" width="6.90" height="6.90" fill="#666666"/><rect x="82.20" y="68.50" width="6.90" height="6.90" fill="#999999"/><rect x="82.20" y="75.35" width="6.90" height="6.90" fill="#666666"/><rect x="82.20" y="82.20" width="6.90" height="6.90" fill="#999999"/><rect x="89.05" y="0.00" width="6.90" height="6.90" fill="#666666"/><rect x="89.05" y="6.85" width="6.90" height="6.90" fill="#999999"/><rect x="89.05" y="13.70" width="6.90" height="6.90" fill="#666666"/><rect x="89.05" y="20.55" width="6.90" height="6.90" fill="#999999"/><rect x="89.05" y="27.40" width="6.90" height="6.90" fill="#666666"/><rect x="89.05" y="34.25" width="6.90" height="6.90" fill="#999999"/><rect x="89.05" y="41.10" width="6.90" height="6.90" fill="#666666"/><rect x="89.05" y="47.95" width="6.90" height="6.90" fill="#999999"/><rect x="89.05" y="54.80" width="6.90" height="6.90" fill="#666666"/><rect x="89.05" y="61.65" width="6.90" height="6.90" fill="#999999"/><rect x="89.05" y="68.50" width="6.90" height="6.90" fill="#666666"/><rect x="89.05" y="75.35" width="6.90" height="6.90" fill="#999999"/><rect x="89.05" y="82.20" width="6.90" height="6.90" fill="#666666"/><rect x="95.90" y="0.00" width="6.90" height="6.90" fill="#999999"/><rect x="95.90" y="6.85" width="6.90" height="6.90" fill="#666666"/><rect x="95.90" y="13.70" width="6.90" height="6.90" fill="#999999"/><rect x="95.90" y="20.55" width="6.90" height="6.90" fill="#666666"/><rect x="95.90" y="27.40" width="6.90" height="6.90" fill="#999999"/><rect x="95.90" y="34.25" width="6.90" height="6.90" fill="#666666"/><rect x="95.90" y="41.10" width="6.90" height="6.90" fill="#999999"/><rect x="95.90" y="47.95" width="6.90" height="6.90" fill="#666666"/><rect x="95.90" y="54.80" width="6.90" height="6.90" fill="#999999"/><rect x="95.90" y="61.65" width="6.90" height="6.90" fill="#666666"/><rect x="95.90" y="68.50" width="6.90" height="6.90" fill="#999999"/><rect x="95.90" y="75.35" width="6.90" height="6.90" fill="#666666"/><rect x="95.90" y="82.20" width="6.90" height="6.90" fill="#999999"/><rect x="102.75" y="0.00" width="6.90" height="6.90" fill="#666666"/><rect x="102.75" y="6.85" width="6.90" height="6.90" fill="#999999"/><rect x="102.75" y="13.70" width="6.90" height="6.90" fill="#666666"/><rect x="102.75" y="20.55" width="6.90" height="6.90" fill="#999999"/><rect x="102.75" y="27.40" width="6.90" height="6.90" fill="#666666"/><rect x="102.75" y="34.25" width="6.90" height="6.90" fill="#999999"/><rect x="102.75" y="41.10" width="6.90" height="6.90" fill="#666666"/><rect x="102.75" y="47.95" width="6.90" height="6.90" fill="#999999"/><rect x="102.75" y="54.80" width="6.90" height="6.90" fill="#666666"/><rect x="102.75" y="61.65" width="6.90" height="6.90" fill="#999999"/><rect x="102.75" y="68.50" width="6.90" height="6.90" fill="#666666"/><rect x="102.75" y="75.35" width="6.90" height="6.90" fill="#999999"/><rect x="102.75" y="82.20" width="6.90" height="6.90" fill="#666666"/><rect x="109.60" y="0.00" width="6.90" height="6.90" fill="#999999"/><rect x="109.60" y="6.85" width="6.90" height="6.90" fill="#666666"/><rect x="109.60" y="13.70" width="6.90" height="6.90" fill="#999999"/><rect x="109.60" y="20.55" width="6.90" height="6.90" fill="#666666"/><rect x="109.60" y="27.40" width="6.90" height="6.90" fill="#999999"/><rect x="109.60" y="34.25" width="6.90" height="6.90" fill="#666666"/><rect x="109.60" y="41.10" width="6.90" height="6.90" fill="#999999"/><rect x="109.60" y="47.95" width="6.90" height="6.90" fill="#666666"/><rect x="109.60" y="54.80" width="6.90" height="6.90" fill="#999999"/><rect x="109.60" y="61.65" width="6.90" height="6.90" fill="#666666"/><rect x="109.60" y="68.50" width="6.90" height="6.90" fill="#999999"/><rect x="109.60" y="75.35" width="6.90" height="6.90" fill="#666666"/><rect x="109.60" y="82.20" width="6.90" height="6.90" fill="#999999"/><rect x="116.45" y="0.00" width="6.90" height="6.90" fill="#666666"/><rect x="116.45" y="6.85" width="6.90" height="6.90" fill="#999999"/><rect x="116.45" y="13.70" width="6.90" height="6.90" fill="#666666"/><rect x="116.45" y="20.55" width="6.90" height="6.90" fill="#999999"/><rect x="116.45" y="27.40" width="6.90" height="6.90" fill="#666666"/><rect x="116.45" y="34.25" width="6.90" height="6.90" fill="#999999"/><rect x="116.45" y="41.10" width="6.90" height="6.90" fill="#666666"/><rect x="116.45" y="47.95" width="6.90" height="6.90" fill="#999999"/><rect x="116.45" y="54.80" width="6.90" height="6.90" fill="#666666"/><rect x="116.45" y="61.65" width="6.90" height="6.90" fill="#999999"/><rect x="116.45" y="68.50" width="6.90" height="6.90" fill="#666666"/><rect x="116.45" y="75.35" width="6.90" height="6.90" fill="#999999"/><rect x="116.45" y="82.20" width="6.90" height="6.90" fill="#666666"/><rect x="123.30" y="0.00" width="6.90" height="6.90" fill="#999999"/><rect x="123.30" y="6.85" width="6.90" height="6.90" fill="#666666"/><rect x="123.30" y="13.70" width="6.90" height="6.90" fill="#999999"/><rect x="123.30" y="20.55" width="6.90" height="6.90" fill="#666666"/><rect x="123.30" y="27.40" width="6.90" height="6.90" fill="#999999"/><rect x="123.30" y="34.25" width="6.90" height="6.90" fill="#666666"/><rect x="123.30" y="41.10" width="6.90" height="6.90" fill="#999999"/><rect x="123.30" y="47.95" width="6.90" height="6.90" fill="#666666"/><rect x="123.30" y="54.80" width="6.90" height="6.90" fill="#999999"/><rect x="123.30" y="61.65" width="6.90" height="6.90" fill="#666666"/><rect x="123.30" y="68.50" width="6.90" height="6.90" fill="#999999"/><rect x="123.30" y="75.35" width="6.90" height="6.90" fill="#666666"/><rect x="123.30" y="82.20" width="6.90" height="6.90" fill="#999999"/><rect x="130.15" y="0.00" width="6.90" height="6.90" fill="#666666"/><rect x="130.15" y="6.85" width="6.90" height="6.90" fill="#999999"/><rect x="130.15" y="13.70" width="6.90" height="6.90" fill="#666666"/><rect x="130.15" y="20.55" width="6.90" height="6.90" fill="#999999"/><rect x="130.15" y="27.40" width="6.90" height="6.90" fill="#666666"/><rect x="130.15" y="34.25" width="6.90" height="6.90" fill="#999999"/><rect x="130.15" y="41.10" width="6.90" height="6.90" fill="#666666"/><rect x="130.15" y="47.95" width="6.90" height="6.90" fill="#999999"/><rect x="130.15" y="54.80" width="6.90" height="6.90" fill="#666666"/><rect x="130.15" y="61.65" width="6.90" height="6.90" fill="#999999"/><rect x="130.15" y="68.50" width="6.90" height="6.90" fill="#666666"/><rect x="130.15" y="75.35" width="6.90" height="6.90" fill="#999999"/><rect x="130.15" y="82.20" width="6.90" height="6.90" fill="#666666"/>
<path d="M17 41 L113.8 40.6 L113.8 41.8 L17 42 Z" fill="#7fbf6a" opacity="0.8"/>
<path d="M17 62 L111 61.6 L111 62.8 L17 63 Z" fill="#7fbf6a" opacity="0.8"/>
<g fill="#5aa83a">
<path d="M40.8 43 C44 39 50 35 55 33 C58 31.5 60 30 62.3 30 C65 30.5 67 33 70 35 C75 38 80 41 86 43 Z"/>
<circle cx="62.3" cy="23.8" r="2.4"/>
<path d="M59 9.7 L60.3 9.5 L62.8 20.4 L61.6 20.6 Z"/>
<path d="M43 21.5 L44.5 21.3 L48.8 33.3 L47.2 33.5 Z"/>
<circle cx="39" cy="15.5" r="2"/>
<path d="M26 32 L32 34 L31.5 35 L25.5 33 Z"/><path d="M34 36 L42 38 L41.5 39.2 L33.5 37.2 Z"/><path d="M30 38.5 L36 39.5 L36 40.5 L30 39.5 Z"/>
<path d="M36 63 C42 60 55 59.5 70 60 C82 60.5 92 62 96.6 64 C94 67 92 70 88 72 C82 76 72 77.5 60 77 C50 76.5 42 74.5 36 72 L22 76.5 L20.3 75.2 L33 69 C33 67 34 65 36 63 Z"/>
<circle cx="86" cy="83.8" r="2.4"/>
<circle cx="27" cy="73" r="1.3"/><circle cx="78" cy="80" r="1"/><circle cx="92" cy="70" r="1.1"/><circle cx="24" cy="70" r="1"/>
</g>
<g fill="#e8204e">
<path d="M43.2 1 L45 0.8 L50.3 29 L48.5 29.3 Z"/>
<path d="M48 29 C51 30 53.6 33 53 37 C52.5 40 50 43 44 43 C41 43 40.5 41 41 39 C42 35 44.5 30 48 29 Z"/>
<circle cx="65.4" cy="3.9" r="2.2"/><circle cx="72.5" cy="8.6" r="2"/>
<path d="M59.3 11.8 L60.5 11.6 L63.5 23.6 L62.3 23.8 Z"/>
<path d="M70 29 L72 29.5 L76 36 L86 42.5 L85 43.2 L73 38.5 L69.5 33 Z"/>
<circle cx="63.3" cy="28" r="1.3"/>
<circle cx="72.9" cy="84.2" r="2.2"/><circle cx="65.5" cy="78.4" r="1.2"/><circle cx="83.7" cy="71" r="1.4"/>
<path d="M34 62 L41 61 L41 63.5 L34 64.5 Z"/>
<circle cx="33" cy="31" r="1"/><circle cx="30.5" cy="36" r="0.9"/>
</g>
<text x="20.3" y="56.3" font-family="Liberation Sans" font-size="9.6" font-weight="bold" fill="#e8204e" letter-spacing="0.3">小刀娱乐</text>
<text x="67.6" y="56.3" font-family="Liberation Sans" font-size="9.6" font-weight="bold" fill="#5aa83a" letter-spacing="0.6">乐于分享</text>
</svg>
<svg style="left:181px;top:50px;" width="42" height="28" viewBox="0 0 42 28"><rect x="0" y="0" width="4.2" height="4.2" fill="#9a9a9a"/><rect x="0" y="4" width="4.2" height="4.2" fill="#6a6a6a"/><rect x="0" y="8" width="4.2" height="4.2" fill="#9a9a9a"/><rect x="0" y="12" width="4.2" height="4.2" fill="#6a6a6a"/><rect x="0" y="16" width="4.2" height="4.2" fill="#9a9a9a"/><rect x="0" y="20" width="4.2" height="4.2" fill="#6a6a6a"/><rect x="0" y="24" width="4.2" height="4.2" fill="#9a9a9a"/><rect x="0" y="28" width="4.2" height="4.2" fill="#6a6a6a"/><rect x="4" y="0" width="4.2" height="4.2" fill="#6a6a6a"/><rect x="4" y="4" width="4.2" height="4.2" fill="#9a9a9a"/><rect x="4" y="8" width="4.2" height="4.2" fill="#6a6a6a"/><rect x="4" y="12" width="4.2" height="4.2" fill="#9a9a9a"/><rect x="4" y="16" width="4.2" height="4.2" fill="#6a6a6a"/><rect x="4" y="20" width="4.2" height="4.2" fill="#9a9a9a"/><rect x="4" y="24" width="4.2" height="4.2" fill="#6a6a6a"/><rect x="4" y="28" width="4.2" height="4.2" fill="#9a9a9a"/><rect x="8" y="0" width="4.2" height="4.2" fill="#9a9a9a"/><rect x="8" y="4" width="4.2" height="4.2" fill="#6a6a6a"/><rect x="8" y="8" width="4.2" height="4.2" fill="#9a9a9a"/><rect x="8" y="12" width="4.2" height="4.2" fill="#6a6a6a"/><rect x="8" y="16" width="4.2" height="4.2" fill="#9a9a9a"/><rect x="8" y="20" width="4.2" height="4.2" fill="#6a6a6a"/><rect x="8" y="24" width="4.2" height="4.2" fill="#9a9a9a"/><rect x="8" y="28" width="4.2" height="4.2" fill="#6a6a6a"/><rect x="12" y="0" width="4.2" height="4.2" fill="#6a6a6a"/><rect x="12" y="4" width="4.2" height="4.2" fill="#9a9a9a"/><rect x="12" y="8" width="4.2" height="4.2" fill="#6a6a6a"/><rect x="12" y="12" width="4.2" height="4.2" fill="#9a9a9a"/><rect x="12" y="16" width="4.2" height="4.2" fill="#6a6a6a"/><rect x="12" y="20" width="4.2" height="4.2" fill="#9a9a9a"/><rect x="12" y="24" width="4.2" height="4.2" fill="#6a6a6a"/><rect x="12" y="28" width="4.2" height="4.2" fill="#9a9a9a"/><rect x="16" y="0" width="4.2" height="4.2" fill="#9a9a9a"/><rect x="16" y="4" width="4.2" height="4.2" fill="#6a6a6a"/><rect x="16" y="8" width="4.2" height="4.2" fill="#9a9a9a"/><rect x="16" y="12" width="4.2" height="4.2" fill="#6a6a6a"/><rect x="16" y="16" width="4.2" height="4.2" fill="#9a9a9a"/><rect x="16" y="20" width="4.2" height="4.2" fill="#6a6a6a"/><rect x="16" y="24" width="4.2" height="4.2" fill="#9a9a9a"/><rect x="16" y="28" width="4.2" height="4.2" fill="#6a6a6a"/><rect x="20" y="0" width="4.2" height="4.2" fill="#6a6a6a"/><rect x="20" y="4" width="4.2" height="4.2" fill="#9a9a9a"/><rect x="20" y="8" width="4.2" height="4.2" fill="#6a6a6a"/><rect x="20" y="12" width="4.2" height="4.2" fill="#9a9a9a"/><rect x="20" y="16" width="4.2" height="4.2" fill="#6a6a6a"/><rect x="20" y="20" width="4.2" height="4.2" fill="#9a9a9a"/><rect x="20" y="24" width="4.2" height="4.2" fill="#6a6a6a"/><rect x="20" y="28" width="4.2" height="4.2" fill="#9a9a9a"/><rect x="24" y="0" width="4.2" height="4.2" fill="#9a9a9a"/><rect x="24" y="4" width="4.2" height="4.2" fill="#6a6a6a"/><rect x="24" y="8" width="4.2" height="4.2" fill="#9a9a9a"/><rect x="24" y="12" width="4.2" height="4.2" fill="#6a6a6a"/><rect x="24" y="16" width="4.2" height="4.2" fill="#9a9a9a"/><rect x="24" y="20" width="4.2" height="4.2" fill="#6a6a6a"/><rect x="24" y="24" width="4.2" height="4.2" fill="#9a9a9a"/><rect x="24" y="28" width="4.2" height="4.2" fill="#6a6a6a"/><rect x="28" y="0" width="4.2" height="4.2" fill="#6a6a6a"/><rect x="28" y="4" width="4.2" height="4.2" fill="#9a9a9a"/><rect x="28" y="8" width="4.2" height="4.2" fill="#6a6a6a"/><rect x="28" y="12" width="4.2" height="4.2" fill="#9a9a9a"/><rect x="28" y="16" width="4.2" height="4.2" fill="#6a6a6a"/><rect x="28" y="20" width="4.2" height="4.2" fill="#9a9a9a"/><rect x="28" y="24" width="4.2" height="4.2" fill="#6a6a6a"/><rect x="28" y="28" width="4.2" height="4.2" fill="#9a9a9a"/><rect x="32" y="0" width="4.2" height="4.2" fill="#9a9a9a"/><rect x="32" y="4" width="4.2" height="4.2" fill="#6a6a6a"/><rect x="32" y="8" width="4.2" height="4.2" fill="#9a9a9a"/><rect x="32" y="12" width="4.2" height="4.2" fill="#6a6a6a"/><rect x="32" y="16" width="4.2" height="4.2" fill="#9a9a9a"/><rect x="32" y="20" width="4.2" height="4.2" fill="#6a6a6a"/><rect x="32" y="24" width="4.2" height="4.2" fill="#9a9a9a"/><rect x="32" y="28" width="4.2" height="4.2" fill="#6a6a6a"/><rect x="36" y="0" width="4.2" height="4.2" fill="#6a6a6a"/><rect x="36" y="4" width="4.2" height="4.2" fill="#9a9a9a"/><rect x="36" y="8" width="4.2" height="4.2" fill="#6a6a6a"/><rect x="36" y="12" width="4.2" height="4.2" fill="#9a9a9a"/><rect x="36" y="16" width="4.2" height="4.2" fill="#6a6a6a"/><rect x="36" y="20" width="4.2" height="4.2" fill="#9a9a9a"/><rect x="36" y="24" width="4.2" height="4.2" fill="#6a6a6a"/><rect x="36" y="28" width="4.2" height="4.2" fill="#9a9a9a"/><rect x="40" y="0" width="4.2" height="4.2" fill="#9a9a9a"/><rect x="40" y="4" width="4.2" height="4.2" fill="#6a6a6a"/><rect x="40" y="8" width="4.2" height="4.2" fill="#9a9a9a"/><rect x="40" y="12" width="4.2" height="4.2" fill="#6a6a6a"/><rect x="40" y="16" width="4.2" height="4.2" fill="#9a9a9a"/><rect x="40" y="20" width="4.2" height="4.2" fill="#6a6a6a"/><rect x="40" y="24" width="4.2" height="4.2" fill="#9a9a9a"/><rect x="40" y="28" width="4.2" height="4.2" fill="#6a6a6a"/><g transform="scale(0.321)">
<path d="M17 41 L113.8 40.6 L113.8 41.8 L17 42 Z" fill="#7fbf6a" opacity="0.8"/>
<path d="M17 62 L111 61.6 L111 62.8 L17 63 Z" fill="#7fbf6a" opacity="0.8"/>
<g fill="#5aa83a">
<path d="M40.8 43 C44 39 50 35 55 33 C58 31.5 60 30 62.3 30 C65 30.5 67 33 70 35 C75 38 80 41 86 43 Z"/>
<circle cx="62.3" cy="23.8" r="2.4"/>
<path d="M59 9.7 L60.3 9.5 L62.8 20.4 L61.6 20.6 Z"/>
<path d="M43 21.5 L44.5 21.3 L48.8 33.3 L47.2 33.5 Z"/>
<circle cx="39" cy="15.5" r="2"/>
<path d="M26 32 L32 34 L31.5 35 L25.5 33 Z"/><path d="M34 36 L42 38 L41.5 39.2 L33.5 37.2 Z"/><path d="M30 38.5 L36 39.5 L36 40.5 L30 39.5 Z"/>
<path d="M36 63 C42 60 55 59.5 70 60 C82 60.5 92 62 96.6 64 C94 67 92 70 88 72 C82 76 72 77.5 60 77 C50 76.5 42 74.5 36 72 L22 76.5 L20.3 75.2 L33 69 C33 67 34 65 36 63 Z"/>
<circle cx="86" cy="83.8" r="2.4"/>
<circle cx="27" cy="73" r="1.3"/><circle cx="78" cy="80" r="1"/><circle cx="92" cy="70" r="1.1"/><circle cx="24" cy="70" r="1"/>
</g>
<g fill="#e8204e">
<path d="M43.2 1 L45 0.8 L50.3 29 L48.5 29.3 Z"/>
<path d="M48 29 C51 30 53.6 33 53 37 C52.5 40 50 43 44 43 C41 43 40.5 41 41 39 C42 35 44.5 30 48 29 Z"/>
<circle cx="65.4" cy="3.9" r="2.2"/><circle cx="72.5" cy="8.6" r="2"/>
<path d="M59.3 11.8 L60.5 11.6 L63.5 23.6 L62.3 23.8 Z"/>
<path d="M70 29 L72 29.5 L76 36 L86 42.5 L85 43.2 L73 38.5 L69.5 33 Z"/>
<circle cx="63.3" cy="28" r="1.3"/>
<circle cx="72.9" cy="84.2" r="2.2"/><circle cx="65.5" cy="78.4" r="1.2"/><circle cx="83.7" cy="71" r="1.4"/>
<path d="M34 62 L41 61 L41 63.5 L34 64.5 Z"/>
<circle cx="33" cy="31" r="1"/><circle cx="30.5" cy="36" r="0.9"/>
</g>
<text x="20.3" y="56.3" font-family="Liberation Sans" font-size="9.6" font-weight="bold" fill="#e8204e" letter-spacing="0.3">小刀娱乐</text>
<text x="67.6" y="56.3" font-family="Liberation Sans" font-size="9.6" font-weight="bold" fill="#5aa83a" letter-spacing="0.6">乐于分享</text>
</g></svg>
<svg style="left:270px;top:240px;" width="150" height="105" viewBox="0 0 150 105"><rect x="9" y="9.5" width="131" height="86.5" fill="none" stroke="#000" stroke-width="1.6"/><rect x="9" y="9.5" width="131" height="86.5" fill="none" stroke="#f2ee00" stroke-width="1.6" stroke-dasharray="4 3"/></svg>
<div style="left:501px;top:102px;width:9.5px;height:401px;background:#939393;border:1.5px solid #1c1c1c;border-radius:5px"></div>
<div style="left:190px;top:507px;width:307px;height:9.5px;background:#939393;border:1.5px solid #1c1c1c;border-radius:5px"></div>
<svg style="left:175px;top:505px;" width="15" height="14" viewBox="0 0 15 14"><rect x="0" y="0" width="15" height="14" fill="#555"/><rect x="2.5" y="2.5" width="10" height="9" fill="none" stroke="#ddd" stroke-width="1" stroke-dasharray="1.5 1"/></svg>
<svg style="left:498px;top:504px;" width="16" height="16" viewBox="0 0 16 16"><path d="M7.8 1 L14.6 14.6 L7.8 11.2 L1 14.6 Z" fill="#e8e8e8"/></svg>
<div class="t" style="left:187px;top:529px;font-size:11.5px;color:#dcdcdc">246.0, -18.0</div>
<div style="left:261px;top:520px;width:27px;height:28px;background:#2a2a2a;border-radius:4px 0 0 4px"></div>
<div style="left:288px;top:520px;width:0px;height:28px;"></div>
<div style="left:261px;top:520px;width:53px;height:28px;background:#2a2a2a;border:1px solid #222;border-radius:4px"></div>
<div class="t" style="left:270px;top:529px;font-size:11.5px;color:#dcdcdc">px</div>
<svg style="left:292px;top:531px;" width="11" height="7" viewBox="0 0 11 7"><path d="M0 0 H10 L5 6 Z" fill="#dcdcdc"/></svg>
<div style="left:315px;top:520px;width:76px;height:28px;background:#2a2a2a;border:1px solid #222;border-radius:4px"></div>
<div style="left:361px;top:521px;width:1px;height:26px;background:#222"></div>
<div class="t" style="left:324px;top:529px;font-size:11.5px;color:#dcdcdc;letter-spacing:-0.3px">100 %</div>
<svg style="left:372px;top:531px;" width="11" height="7" viewBox="0 0 11 7"><path d="M0 0 H10 L5 6 Z" fill="#dcdcdc"/></svg>
<div class="t" style="left:394px;top:529px;font-size:11.5px;color:#dcdcdc;letter-spacing:-0.25px">www.x6d.com.p...</div>
<svg style="left:491px;top:527px;" width="14" height="14" viewBox="0 0 14 14"><rect x="0.5" y="0.5" width="13" height="13" rx="1.5" fill="none" stroke="#555"/><path d="M3.5 4 C3.5 2.8 5 2.8 5 4 C5 2.8 6.5 2.8 6.5 4 C6.5 5 5 6 5 6.5 C5 6 3.5 5 3.5 4 Z M7.5 8 C7.5 6.8 9 6.8 9 8 C9 6.8 10.5 6.8 10.5 8 C10.5 9 9 10 9 10.5 C9 10 7.5 9 7.5 8 Z" fill="#666"/></svg>
<div style="left:523px;top:49px;width:175px;height:500px;background:#3b3b3b"></div>
<div style="left:523px;top:77px;width:174px;height:1px;background:#2b2b2b"></div>
<div style="left:529px;top:49px;width:29px;height:28px;background:#1f1f1f"></div>
<div style="left:529px;top:73px;width:29px;height:4px;background:#555"></div>
<div style="left:561px;top:49px;width:30px;height:28px;border:1px solid #282828;border-bottom:none"></div>
<div style="left:595px;top:49px;width:29px;height:28px;border:1px solid #282828;border-bottom:none"></div>
<div style="left:627px;top:49px;width:31px;height:28px;border:1px solid #282828;border-bottom:none"></div>
<svg style="left:523px;top:49px;" width="175" height="28" viewBox="0 0 175 28">
<path d="M25 7 C22 10 19 14 16.5 17 L18.5 18.7 C21 15.5 23.5 11 25 7 Z" fill="#dcdcdc"/>
<path d="M16 17.5 C13 18 14 20.5 11 21.5 C15 22.5 18.5 21 18.5 19 Z" fill="#dcdcdc"/>
<g fill="#dcdcdc">
<path d="M45.6 7.2 H49.3 V8.8 H47.2 V10.5 H45.6 Z"/>
<path d="M60.2 7.2 H56.5 V8.8 H58.6 V10.5 H60.2 Z"/>
<path d="M45.6 21.4 H49.3 V19.8 H47.2 V18.1 H45.6 Z"/>
<path d="M60.2 21.4 H56.5 V19.8 H58.6 V18.1 H60.2 Z"/>
<path d="M50.5 7.2 H55.3 A2.4 2.4 0 0 1 50.5 7.2 Z"/>
<path d="M50.5 21.4 H55.3 A2.4 2.4 0 0 0 50.5 21.4 Z"/>
<path d="M45.6 11.9 V16.7 A2.4 2.4 0 0 0 45.6 11.9 Z"/>
<path d="M60.2 11.9 V16.7 A2.4 2.4 0 0 1 60.2 11.9 Z"/>
<circle cx="52.9" cy="14.3" r="2"/>
</g>
<text x="80.3" y="13.2" font-family="Liberation Sans" font-size="8.5" fill="#dcdcdc">a</text>
<text x="80" y="21.5" font-family="Liberation Serif" font-style="italic" font-size="11" fill="#dcdcdc">c</text>
<text x="85.8" y="16" font-family="Liberation Sans" font-weight="bold" font-size="9.5" fill="#dcdcdc">b</text>
<path d="M113.3 7.4 L122.9 7.4 L125.4 10.7 L116.2 10.7 Z" fill="#e2e2e2"/><path d="M116.2 10.7 L125.4 10.7 L122.9 14.0 L113.3 14.0 Z" fill="#9c9c9c"/><path d="M113.3 14.0 L122.9 14.0 L125.4 17.3 L116.2 17.3 Z" fill="#e2e2e2"/><path d="M116.2 17.3 L125.4 17.3 L122.9 21.5 L113.3 21.5 Z" fill="#8c8c8c"/>
<rect x="159.5" y="9.5" width="9" height="8" fill="none" stroke="#dcdcdc" stroke-width="1"/>
<path d="M166 11 L161.5 13.5 L166 16 Z" fill="#dcdcdc"/>
</svg>
<div style="left:525px;top:80px;width:171px;height:20px;background:#282828;border-radius:5px"></div>
<div class="t" style="left:533px;top:85.0px;font-size:10.5px;color:#8a8a8a;font-style:italic">过滤</div>
<svg style="left:674px;top:84px;" width="16" height="10" viewBox="0 0 16 10"><path d="M2 2 L8 8 L14 2" fill="none" stroke="#dcdcdc" stroke-width="2"/></svg>
<div class="t" style="left:526px;top:104px;font-size:11.5px;color:#cfcfcf;font-style:italic;letter-spacing:-0.15px">2. Hardness 050 (51 × 51)</div>
<div style="left:524px;top:118px;width:171px;height:131px;background:#232323"></div>
<div style="left:688px;top:118px;width:7px;height:131px;background:#282828"></div>
<div style="left:690px;top:122.5px;width:3px;height:41px;background:#4e4e4e;border-radius:1.5px"></div>
<svg style="left:524px;top:118px;" width="150" height="131" viewBox="0 0 150 131"><rect x="2.4" y="1.6" width="28" height="28.0" fill="#fff"/><rect x="32.2" y="1.6" width="28" height="28.0" fill="#fff"/><rect x="61.8" y="1.6" width="28" height="28.0" fill="#fff"/><rect x="91.6" y="1.6" width="28" height="28.0" fill="#fff"/><rect x="121.0" y="1.6" width="28" height="28.0" fill="#fff"/><rect x="2.4" y="31.4" width="28" height="28.0" fill="#fff"/><rect x="32.2" y="31.4" width="28" height="28.0" fill="#fff"/><rect x="61.8" y="31.4" width="28" height="28.0" fill="#fff"/><rect x="91.6" y="31.4" width="28" height="28.0" fill="#fff"/><rect x="121.0" y="31.4" width="28" height="28.0" fill="#fff"/><rect x="2.4" y="61.3" width="28" height="28.0" fill="#fff"/><rect x="32.2" y="61.3" width="28" height="28.0" fill="#fff"/><rect x="61.8" y="61.3" width="28" height="28.0" fill="#fff"/><rect x="91.6" y="61.3" width="28" height="28.0" fill="#fff"/><rect x="121.0" y="61.3" width="28" height="28.0" fill="#fff"/><rect x="2.4" y="90.9" width="28" height="28.0" fill="#fff"/><rect x="32.2" y="90.9" width="28" height="28.0" fill="#fff"/><rect x="61.8" y="90.9" width="28" height="28.0" fill="#fff"/><rect x="91.6" y="90.9" width="28" height="28.0" fill="#fff"/><rect x="121.0" y="90.9" width="28" height="28.0" fill="#fff"/><rect x="2.4" y="120.7" width="28" height="10.3" fill="#fff"/><rect x="32.2" y="120.7" width="28" height="10.3" fill="#fff"/><rect x="61.8" y="120.7" width="28" height="10.3" fill="#fff"/><rect x="91.6" y="120.7" width="28" height="10.3" fill="#fff"/><rect x="121.0" y="120.7" width="28" height="10.3" fill="#fff"/>
<defs>
<radialGradient id="g1"><stop offset="0" stop-color="#000"/><stop offset="0.25" stop-color="#222"/><stop offset="1" stop-color="#fff" stop-opacity="0"/></radialGradient>
<radialGradient id="g2"><stop offset="0" stop-color="#000"/><stop offset="0.4" stop-color="#111"/><stop offset="1" stop-color="#fff" stop-opacity="0"/></radialGradient>
<radialGradient id="g3"><stop offset="0" stop-color="#000"/><stop offset="0.6" stop-color="#000"/><stop offset="1" stop-color="#fff" stop-opacity="0"/></radialGradient>
</defs>
<circle cx="75" cy="15" r="1.3" fill="#000"/>
<rect x="95" y="11" width="22" height="6" fill="#000"/>
<ellipse cx="135" cy="15" rx="11" ry="4.8" fill="url(#g2)"/>
<rect x="5" y="46" width="22" height="1" fill="#333"/>
<circle cx="46" cy="45" r="9" fill="url(#g1)"/>
<circle cx="76" cy="45" r="11" fill="url(#g2)"/>
<circle cx="105" cy="45" r="13" fill="url(#g3)"/>
<circle cx="135" cy="45" r="14" fill="#000"/>
<path d="M16.5 64.8 L19.9 72.6 L28.4 73.4 L22.0 79.1 L23.8 87.4 L16.5 83.1 L9.2 87.4 L11.0 79.1 L4.6 73.4 L13.1 72.6 Z" fill="#000" stroke="#000" stroke-width="1.2" stroke-linejoin="round"/>
<radialGradient id="gs"><stop offset="0" stop-color="#000" stop-opacity="0.75"/><stop offset="0.6" stop-color="#000" stop-opacity="0.35"/><stop offset="1" stop-color="#000" stop-opacity="0"/></radialGradient><ellipse cx="47" cy="75" rx="9" ry="9" fill="url(#gs)"/><ellipse cx="76" cy="75" rx="10" ry="6" fill="url(#gs)" opacity="0.7"/><ellipse cx="105" cy="76" rx="6" ry="11" fill="url(#gs)" opacity="0.6"/><ellipse cx="135" cy="75" rx="9" ry="9" fill="url(#gs)" opacity="0.55"/><ellipse cx="16" cy="104" rx="10" ry="10" fill="url(#gs)"/><circle cx="135" cy="137" r="14" fill="#111"/><circle cx="46.0" cy="76.9" r="1.09" fill="#000" opacity="0.34"/><circle cx="43.5" cy="74.2" r="0.55" fill="#000" opacity="0.60"/><circle cx="50.9" cy="75.9" r="0.56" fill="#000" opacity="0.35"/><circle cx="40.7" cy="78.2" r="0.61" fill="#000" opacity="0.43"/><circle cx="40.6" cy="68.4" r="1.02" fill="#000" opacity="0.54"/><circle cx="48.2" cy="74.8" r="1.27" fill="#000" opacity="0.47"/><circle cx="48.2" cy="76.5" r="0.78" fill="#000" opacity="0.79"/><circle cx="49.1" cy="79.5" r="1.08" fill="#000" opacity="0.52"/><circle cx="45.7" cy="74.6" r="0.55" fill="#000" opacity="0.42"/><circle cx="45.3" cy="71.4" r="0.78" fill="#000" opacity="0.65"/><circle cx="43.9" cy="75.9" r="1.21" fill="#000" opacity="0.72"/><circle cx="47.2" cy="80.0" r="0.97" fill="#000" opacity="0.83"/><circle cx="46.6" cy="71.9" r="1.38" fill="#000" opacity="0.37"/><circle cx="41.4" cy="78.1" r="0.64" fill="#000" opacity="0.59"/><circle cx="52.5" cy="76.4" r="1.19" fill="#000" opacity="0.64"/><circle cx="49.3" cy="72.7" r="1.13" fill="#000" opacity="0.66"/><circle cx="43.3" cy="73.0" r="1.26" fill="#000" opacity="0.87"/><circle cx="41.5" cy="75.9" r="0.55" fill="#000" opacity="0.72"/><circle cx="39.8" cy="65.4" r="1.24" fill="#000" opacity="0.47"/><circle cx="42.7" cy="78.7" r="0.52" fill="#000" opacity="0.58"/><circle cx="47.9" cy="76.7" r="0.55" fill="#000" opacity="0.76"/><circle cx="49.0" cy="77.1" r="0.85" fill="#000" opacity="0.82"/><circle cx="50.6" cy="77.0" r="0.99" fill="#000" opacity="0.83"/><circle cx="50.2" cy="68.1" r="0.75" fill="#000" opacity="0.55"/><circle cx="42.0" cy="81.1" r="1.36" fill="#000" opacity="0.39"/><circle cx="48.2" cy="77.5" r="0.71" fill="#000" opacity="0.59"/><circle cx="44.5" cy="73.4" r="0.50" fill="#000" opacity="0.55"/><circle cx="43.7" cy="78.6" r="1.36" fill="#000" opacity="0.71"/><circle cx="41.8" cy="74.5" r="1.11" fill="#000" opacity="0.33"/><circle cx="52.3" cy="71.1" r="1.29" fill="#000" opacity="0.78"/><circle cx="44.0" cy="77.4" r="0.59" fill="#000" opacity="0.68"/><circle cx="48.3" cy="75.5" r="0.69" fill="#000" opacity="0.40"/><circle cx="46.3" cy="76.1" r="0.50" fill="#000" opacity="0.39"/><circle cx="49.9" cy="77.2" r="0.52" fill="#000" opacity="0.82"/><circle cx="45.4" cy="73.6" r="0.73" fill="#000" opacity="0.51"/><circle cx="45.7" cy="76.5" r="1.26" fill="#000" opacity="0.90"/><circle cx="42.7" cy="75.9" r="0.58" fill="#000" opacity="0.36"/><circle cx="45.4" cy="77.5" r="1.25" fill="#000" opacity="0.40"/><circle cx="56.2" cy="76.3" r="0.98" fill="#000" opacity="0.39"/><circle cx="46.1" cy="74.8" r="0.98" fill="#000" opacity="0.89"/><circle cx="50.8" cy="70.6" r="0.74" fill="#000" opacity="0.52"/><circle cx="50.3" cy="80.7" r="0.98" fill="#000" opacity="0.77"/><circle cx="45.7" cy="77.4" r="1.23" fill="#000" opacity="0.89"/><circle cx="51.1" cy="69.5" r="1.24" fill="#000" opacity="0.74"/><circle cx="47.7" cy="79.5" r="0.82" fill="#000" opacity="0.32"/><circle cx="50.0" cy="75.5" r="0.73" fill="#000" opacity="0.72"/><circle cx="51.0" cy="73.9" r="1.34" fill="#000" opacity="0.89"/><circle cx="50.5" cy="74.0" r="0.70" fill="#000" opacity="0.44"/><circle cx="47.8" cy="77.4" r="1.06" fill="#000" opacity="0.84"/><circle cx="49.3" cy="71.3" r="1.09" fill="#000" opacity="0.78"/><circle cx="51.8" cy="77.8" r="1.32" fill="#000" opacity="0.77"/><circle cx="47.0" cy="70.7" r="0.66" fill="#000" opacity="0.77"/><circle cx="43.6" cy="80.9" r="1.37" fill="#000" opacity="0.54"/><circle cx="39.5" cy="80.3" r="1.15" fill="#000" opacity="0.40"/><circle cx="48.5" cy="76.6" r="1.31" fill="#000" opacity="0.78"/><circle cx="51.3" cy="80.7" r="1.38" fill="#000" opacity="0.69"/><circle cx="44.2" cy="78.9" r="0.62" fill="#000" opacity="0.31"/><circle cx="52.4" cy="74.0" r="0.97" fill="#000" opacity="0.86"/><circle cx="40.0" cy="78.1" r="1.24" fill="#000" opacity="0.43"/><circle cx="47.0" cy="78.2" r="0.72" fill="#000" opacity="0.65"/><circle cx="46.8" cy="79.0" r="0.62" fill="#000" opacity="0.85"/><circle cx="44.4" cy="78.3" r="1.03" fill="#000" opacity="0.84"/><circle cx="39.5" cy="79.1" r="0.95" fill="#000" opacity="0.62"/><circle cx="46.3" cy="74.9" r="0.90" fill="#000" opacity="0.41"/><circle cx="53.8" cy="75.2" r="0.66" fill="#000" opacity="0.58"/><circle cx="46.2" cy="70.2" r="0.79" fill="#000" opacity="0.61"/><circle cx="40.7" cy="72.7" r="0.60" fill="#000" opacity="0.64"/><circle cx="47.0" cy="78.1" r="1.20" fill="#000" opacity="0.60"/><circle cx="41.1" cy="72.6" r="1.32" fill="#000" opacity="0.57"/><circle cx="43.6" cy="72.1" r="0.96" fill="#000" opacity="0.72"/><circle cx="42.5" cy="76.4" r="0.93" fill="#000" opacity="0.86"/><circle cx="44.6" cy="67.6" r="1.35" fill="#000" opacity="0.46"/><circle cx="38.5" cy="71.7" r="1.26" fill="#000" opacity="0.38"/><circle cx="50.0" cy="77.8" r="0.57" fill="#000" opacity="0.44"/><circle cx="52.1" cy="77.5" r="1.21" fill="#000" opacity="0.84"/><circle cx="50.4" cy="80.0" r="1.09" fill="#000" opacity="0.39"/><circle cx="54.4" cy="68.3" r="0.70" fill="#000" opacity="0.87"/><circle cx="43.5" cy="77.6" r="1.39" fill="#000" opacity="0.80"/><circle cx="49.1" cy="78.4" r="0.96" fill="#000" opacity="0.50"/><circle cx="48.1" cy="78.1" r="1.15" fill="#000" opacity="0.31"/><circle cx="43.1" cy="73.6" r="0.52" fill="#000" opacity="0.50"/><circle cx="43.8" cy="71.8" r="0.56" fill="#000" opacity="0.89"/><circle cx="49.4" cy="65.1" r="0.59" fill="#000" opacity="0.46"/><circle cx="53.4" cy="76.6" r="0.74" fill="#000" opacity="0.38"/><circle cx="39.6" cy="78.9" r="1.24" fill="#000" opacity="0.46"/><circle cx="52.0" cy="81.9" r="1.01" fill="#000" opacity="0.72"/><circle cx="48.1" cy="75.7" r="1.12" fill="#000" opacity="0.56"/><circle cx="55.1" cy="78.9" r="1.07" fill="#000" opacity="0.78"/><circle cx="53.5" cy="78.8" r="0.56" fill="#000" opacity="0.82"/><circle cx="43.7" cy="76.0" r="1.00" fill="#000" opacity="0.86"/><circle cx="46.8" cy="77.0" r="0.97" fill="#000" opacity="0.44"/><circle cx="48.7" cy="76.4" r="0.55" fill="#000" opacity="0.42"/><circle cx="45.8" cy="78.0" r="1.18" fill="#000" opacity="0.47"/><circle cx="44.6" cy="75.0" r="0.81" fill="#000" opacity="0.31"/><circle cx="47.0" cy="75.7" r="1.16" fill="#000" opacity="0.63"/><circle cx="48.6" cy="79.0" r="1.34" fill="#000" opacity="0.36"/><circle cx="48.7" cy="71.3" r="0.95" fill="#000" opacity="0.80"/><circle cx="43.5" cy="77.8" r="1.12" fill="#000" opacity="0.89"/><circle cx="43.0" cy="81.0" r="1.14" fill="#000" opacity="0.68"/><circle cx="44.1" cy="77.0" r="0.55" fill="#000" opacity="0.38"/><circle cx="52.6" cy="77.7" r="0.73" fill="#000" opacity="0.40"/><circle cx="53.3" cy="78.7" r="1.28" fill="#000" opacity="0.70"/><circle cx="46.4" cy="77.8" r="0.76" fill="#000" opacity="0.58"/><circle cx="49.3" cy="78.5" r="0.74" fill="#000" opacity="0.88"/><circle cx="51.7" cy="74.2" r="0.72" fill="#000" opacity="0.88"/><circle cx="45.7" cy="78.3" r="0.50" fill="#000" opacity="0.53"/><circle cx="42.6" cy="75.7" r="0.68" fill="#000" opacity="0.60"/><circle cx="50.0" cy="75.1" r="0.58" fill="#000" opacity="0.54"/><circle cx="47.8" cy="75.2" r="0.77" fill="#000" opacity="0.44"/><circle cx="43.0" cy="72.6" r="1.18" fill="#000" opacity="0.69"/><circle cx="45.3" cy="67.4" r="0.85" fill="#000" opacity="0.50"/><circle cx="49.2" cy="74.8" r="1.15" fill="#000" opacity="0.69"/><circle cx="53.9" cy="77.0" r="1.30" fill="#000" opacity="0.68"/><circle cx="46.3" cy="68.1" r="0.63" fill="#000" opacity="0.61"/><circle cx="39.8" cy="74.8" r="1.22" fill="#000" opacity="0.80"/><circle cx="40.1" cy="71.0" r="1.11" fill="#000" opacity="0.72"/><circle cx="47.1" cy="75.9" r="0.62" fill="#000" opacity="0.52"/><circle cx="52.7" cy="79.4" r="1.00" fill="#000" opacity="0.68"/><circle cx="43.0" cy="70.9" r="0.94" fill="#000" opacity="0.30"/><circle cx="48.9" cy="69.0" r="0.95" fill="#000" opacity="0.62"/><circle cx="46.2" cy="73.8" r="1.16" fill="#000" opacity="0.45"/><circle cx="49.7" cy="76.3" r="1.16" fill="#000" opacity="0.42"/><circle cx="46.3" cy="64.7" r="0.94" fill="#000" opacity="0.53"/><circle cx="41.3" cy="75.8" r="1.19" fill="#000" opacity="0.67"/><circle cx="46.0" cy="73.8" r="0.63" fill="#000" opacity="0.45"/><circle cx="46.9" cy="71.8" r="1.01" fill="#000" opacity="0.31"/><circle cx="49.8" cy="76.1" r="1.10" fill="#000" opacity="0.72"/><circle cx="45.6" cy="72.2" r="0.96" fill="#000" opacity="0.58"/><circle cx="45.1" cy="75.4" r="1.30" fill="#000" opacity="0.42"/><circle cx="55.8" cy="73.8" r="0.52" fill="#000" opacity="0.58"/><circle cx="51.2" cy="66.0" r="0.90" fill="#000" opacity="0.46"/><circle cx="49.3" cy="83.9" r="0.69" fill="#000" opacity="0.65"/><circle cx="49.9" cy="78.6" r="1.36" fill="#000" opacity="0.38"/><circle cx="48.9" cy="70.9" r="1.30" fill="#000" opacity="0.72"/><circle cx="47.9" cy="83.1" r="0.94" fill="#000" opacity="0.31"/><circle cx="51.4" cy="75.1" r="0.91" fill="#000" opacity="0.48"/><circle cx="49.2" cy="77.7" r="0.78" fill="#000" opacity="0.80"/><circle cx="53.3" cy="75.1" r="1.26" fill="#000" opacity="0.37"/><circle cx="52.4" cy="72.3" r="1.31" fill="#000" opacity="0.47"/><circle cx="44.4" cy="77.7" r="1.40" fill="#000" opacity="0.65"/><circle cx="72.6" cy="77.4" r="0.59" fill="#000" opacity="0.33"/><circle cx="83.6" cy="78.4" r="0.60" fill="#000" opacity="0.81"/><circle cx="76.0" cy="77.4" r="0.76" fill="#000" opacity="0.40"/><circle cx="67.3" cy="80.4" r="1.02" fill="#000" opacity="0.75"/><circle cx="68.5" cy="70.1" r="1.06" fill="#000" opacity="0.60"/><circle cx="75.7" cy="74.1" r="0.91" fill="#000" opacity="0.55"/><circle cx="76.1" cy="70.7" r="0.60" fill="#000" opacity="0.33"/><circle cx="78.3" cy="74.3" r="0.73" fill="#000" opacity="0.49"/><circle cx="73.6" cy="79.7" r="1.08" fill="#000" opacity="0.44"/><circle cx="73.6" cy="72.9" r="0.79" fill="#000" opacity="0.52"/><circle cx="77.5" cy="76.5" r="0.55" fill="#000" opacity="0.80"/><circle cx="72.5" cy="75.0" r="1.03" fill="#000" opacity="0.85"/><circle cx="73.4" cy="75.5" r="0.53" fill="#000" opacity="0.35"/><circle cx="74.8" cy="76.1" r="0.57" fill="#000" opacity="0.44"/><circle cx="66.5" cy="72.3" r="0.92" fill="#000" opacity="0.53"/><circle cx="70.8" cy="76.9" r="0.66" fill="#000" opacity="0.49"/><circle cx="79.7" cy="75.9" r="1.08" fill="#000" opacity="0.37"/><circle cx="69.0" cy="74.9" r="1.00" fill="#000" opacity="0.42"/><circle cx="75.5" cy="77.2" r="0.68" fill="#000" opacity="0.55"/><circle cx="85.3" cy="73.3" r="1.01" fill="#000" opacity="0.31"/><circle cx="83.7" cy="75.9" r="1.03" fill="#000" opacity="0.56"/><circle cx="75.9" cy="75.0" r="0.67" fill="#000" opacity="0.81"/><circle cx="80.5" cy="69.8" r="1.08" fill="#000" opacity="0.44"/><circle cx="78.2" cy="76.1" r="0.77" fill="#000" opacity="0.68"/><circle cx="83.5" cy="73.3" r="0.85" fill="#000" opacity="0.72"/><circle cx="69.9" cy="76.0" r="0.43" fill="#000" opacity="0.73"/><circle cx="77.2" cy="81.7" r="0.85" fill="#000" opacity="0.47"/><circle cx="78.6" cy="76.6" r="0.85" fill="#000" opacity="0.68"/><circle cx="77.5" cy="75.7" r="0.77" fill="#000" opacity="0.62"/><circle cx="73.3" cy="76.4" r="0.82" fill="#000" opacity="0.31"/><circle cx="74.2" cy="78.2" r="1.07" fill="#000" opacity="0.65"/><circle cx="80.2" cy="72.7" r="0.56" fill="#000" opacity="0.44"/><circle cx="83.6" cy="73.9" r="0.62" fill="#000" opacity="0.31"/><circle cx="68.5" cy="75.0" r="0.69" fill="#000" opacity="0.44"/><circle cx="70.4" cy="69.1" r="0.56" fill="#000" opacity="0.32"/><circle cx="73.3" cy="77.7" r="0.88" fill="#000" opacity="0.41"/><circle cx="78.4" cy="70.3" r="0.75" fill="#000" opacity="0.41"/><circle cx="80.2" cy="74.5" r="0.97" fill="#000" opacity="0.43"/><circle cx="77.5" cy="80.0" r="0.61" fill="#000" opacity="0.82"/><circle cx="72.8" cy="75.1" r="0.56" fill="#000" opacity="0.53"/><circle cx="69.8" cy="68.7" r="0.50" fill="#000" opacity="0.52"/><circle cx="79.1" cy="82.9" r="0.50" fill="#000" opacity="0.33"/><circle cx="80.6" cy="76.1" r="1.03" fill="#000" opacity="0.79"/><circle cx="74.1" cy="64.7" r="1.05" fill="#000" opacity="0.48"/><circle cx="80.6" cy="81.5" r="0.92" fill="#000" opacity="0.32"/><circle cx="73.5" cy="72.5" r="0.66" fill="#000" opacity="0.48"/><circle cx="76.2" cy="75.2" r="0.60" fill="#000" opacity="0.49"/><circle cx="78.5" cy="74.6" r="1.07" fill="#000" opacity="0.41"/><circle cx="70.2" cy="79.4" r="0.98" fill="#000" opacity="0.54"/><circle cx="81.4" cy="76.0" r="0.66" fill="#000" opacity="0.81"/><circle cx="77.7" cy="77.7" r="1.03" fill="#000" opacity="0.32"/><circle cx="68.3" cy="77.9" r="0.94" fill="#000" opacity="0.32"/><circle cx="77.8" cy="75.2" r="1.04" fill="#000" opacity="0.44"/><circle cx="75.8" cy="68.6" r="0.64" fill="#000" opacity="0.45"/><circle cx="82.7" cy="73.9" r="0.58" fill="#000" opacity="0.69"/><circle cx="74.4" cy="77.2" r="0.40" fill="#000" opacity="0.72"/><circle cx="82.1" cy="72.9" r="1.06" fill="#000" opacity="0.31"/><circle cx="76.6" cy="78.4" r="1.07" fill="#000" opacity="0.82"/><circle cx="73.1" cy="76.5" r="0.70" fill="#000" opacity="0.57"/><circle cx="78.9" cy="74.2" r="0.96" fill="#000" opacity="0.71"/><circle cx="79.8" cy="70.4" r="0.83" fill="#000" opacity="0.48"/><circle cx="74.0" cy="77.6" r="0.95" fill="#000" opacity="0.34"/><circle cx="78.7" cy="79.7" r="0.57" fill="#000" opacity="0.34"/><circle cx="82.2" cy="75.8" r="0.63" fill="#000" opacity="0.84"/><circle cx="87.0" cy="69.0" r="0.59" fill="#000" opacity="0.35"/><circle cx="80.8" cy="77.0" r="0.90" fill="#000" opacity="0.55"/><circle cx="76.5" cy="78.1" r="0.83" fill="#000" opacity="0.67"/><circle cx="75.9" cy="69.2" r="0.87" fill="#000" opacity="0.37"/><circle cx="78.3" cy="72.9" r="0.80" fill="#000" opacity="0.51"/><circle cx="75.8" cy="73.0" r="0.57" fill="#000" opacity="0.43"/><circle cx="81.9" cy="80.1" r="0.80" fill="#000" opacity="0.48"/><circle cx="63.6" cy="80.7" r="0.76" fill="#000" opacity="0.43"/><circle cx="78.6" cy="70.9" r="1.09" fill="#000" opacity="0.36"/><circle cx="66.9" cy="75.9" r="0.99" fill="#000" opacity="0.80"/><circle cx="80.0" cy="75.6" r="0.48" fill="#000" opacity="0.40"/><circle cx="82.5" cy="74.3" r="1.05" fill="#000" opacity="0.50"/><circle cx="79.6" cy="72.6" r="0.58" fill="#000" opacity="0.73"/><circle cx="78.2" cy="74.5" r="0.82" fill="#000" opacity="0.64"/><circle cx="77.0" cy="77.8" r="0.50" fill="#000" opacity="0.41"/><circle cx="75.8" cy="79.1" r="0.86" fill="#000" opacity="0.41"/><circle cx="80.4" cy="75.2" r="0.87" fill="#000" opacity="0.40"/><circle cx="74.7" cy="76.9" r="0.96" fill="#000" opacity="0.60"/><circle cx="78.1" cy="75.5" r="0.68" fill="#000" opacity="0.60"/><circle cx="74.6" cy="74.0" r="0.51" fill="#000" opacity="0.68"/><circle cx="72.6" cy="76.3" r="0.62" fill="#000" opacity="0.82"/><circle cx="73.5" cy="78.6" r="0.65" fill="#000" opacity="0.53"/><circle cx="87.1" cy="67.4" r="0.65" fill="#000" opacity="0.41"/><circle cx="75.5" cy="73.0" r="0.40" fill="#000" opacity="0.80"/><circle cx="67.8" cy="77.6" r="0.68" fill="#000" opacity="0.79"/><circle cx="73.1" cy="75.4" r="0.41" fill="#000" opacity="0.60"/><circle cx="69.0" cy="69.9" r="0.46" fill="#000" opacity="0.64"/><circle cx="71.9" cy="77.6" r="0.50" fill="#000" opacity="0.46"/><circle cx="64.7" cy="74.1" r="0.48" fill="#000" opacity="0.57"/><circle cx="80.4" cy="67.6" r="0.54" fill="#000" opacity="0.37"/><circle cx="88.8" cy="72.1" r="0.74" fill="#000" opacity="0.33"/><circle cx="80.4" cy="73.7" r="1.03" fill="#000" opacity="0.64"/><circle cx="77.3" cy="73.4" r="0.95" fill="#000" opacity="0.42"/><circle cx="68.0" cy="78.3" r="0.98" fill="#000" opacity="0.40"/><circle cx="77.0" cy="78.0" r="0.76" fill="#000" opacity="0.51"/><circle cx="78.7" cy="76.6" r="0.91" fill="#000" opacity="0.79"/><circle cx="82.2" cy="76.0" r="0.93" fill="#000" opacity="0.32"/><circle cx="77.3" cy="73.7" r="0.82" fill="#000" opacity="0.60"/><circle cx="73.0" cy="73.2" r="0.69" fill="#000" opacity="0.62"/><circle cx="69.5" cy="77.0" r="0.71" fill="#000" opacity="0.54"/><circle cx="82.9" cy="75.6" r="0.74" fill="#000" opacity="0.43"/><circle cx="76.7" cy="69.8" r="0.72" fill="#000" opacity="0.40"/><circle cx="73.7" cy="75.2" r="0.49" fill="#000" opacity="0.54"/><circle cx="80.5" cy="76.8" r="0.76" fill="#000" opacity="0.32"/><circle cx="74.6" cy="74.1" r="0.91" fill="#000" opacity="0.73"/><circle cx="74.3" cy="74.9" r="0.75" fill="#000" opacity="0.51"/><circle cx="106.4" cy="75.2" r="1.00" fill="#000" opacity="0.80"/><circle cx="104.4" cy="66.9" r="0.54" fill="#000" opacity="0.79"/><circle cx="98.0" cy="76.6" r="1.04" fill="#000" opacity="0.34"/><circle cx="106.5" cy="64.8" r="0.45" fill="#000" opacity="0.44"/><circle cx="105.1" cy="73.1" r="1.03" fill="#000" opacity="0.40"/><circle cx="105.6" cy="73.4" r="0.75" fill="#000" opacity="0.76"/><circle cx="105.6" cy="79.8" r="0.75" fill="#000" opacity="0.43"/><circle cx="106.7" cy="76.7" r="0.51" fill="#000" opacity="0.77"/><circle cx="102.5" cy="66.4" r="0.52" fill="#000" opacity="0.68"/><circle cx="107.6" cy="80.1" r="0.85" fill="#000" opacity="0.45"/><circle cx="107.5" cy="71.4" r="0.81" fill="#000" opacity="0.74"/><circle cx="112.0" cy="85.6" r="0.84" fill="#000" opacity="0.47"/><circle cx="105.6" cy="72.3" r="1.09" fill="#000" opacity="0.57"/><circle cx="102.0" cy="82.5" r="0.71" fill="#000" opacity="0.35"/><circle cx="105.0" cy="74.4" r="0.97" fill="#000" opacity="0.39"/><circle cx="99.8" cy="65.0" r="0.81" fill="#000" opacity="0.62"/><circle cx="104.9" cy="76.3" r="0.42" fill="#000" opacity="0.33"/><circle cx="102.8" cy="72.5" r="0.76" fill="#000" opacity="0.74"/><circle cx="106.4" cy="78.6" r="0.86" fill="#000" opacity="0.26"/><circle cx="107.6" cy="76.1" r="0.47" fill="#000" opacity="0.45"/><circle cx="105.6" cy="82.5" r="0.81" fill="#000" opacity="0.36"/><circle cx="102.7" cy="72.0" r="0.49" fill="#000" opacity="0.77"/><circle cx="105.1" cy="78.8" r="0.47" fill="#000" opacity="0.60"/><circle cx="108.4" cy="69.7" r="0.68" fill="#000" opacity="0.40"/><circle cx="109.0" cy="76.5" r="0.79" fill="#000" opacity="0.44"/><circle cx="103.2" cy="71.7" r="1.06" fill="#000" opacity="0.65"/><circle cx="105.1" cy="86.8" r="0.43" fill="#000" opacity="0.54"/><circle cx="103.3" cy="78.1" r="0.44" fill="#000" opacity="0.68"/><circle cx="108.5" cy="76.5" r="1.06" fill="#000" opacity="0.33"/><circle cx="106.2" cy="82.5" r="0.75" fill="#000" opacity="0.60"/><circle cx="105.7" cy="73.1" r="0.62" fill="#000" opacity="0.42"/><circle cx="110.6" cy="79.1" r="0.95" fill="#000" opacity="0.64"/><circle cx="110.4" cy="76.4" r="0.92" fill="#000" opacity="0.51"/><circle cx="104.8" cy="70.5" r="0.56" fill="#000" opacity="0.31"/><circle cx="105.1" cy="77.4" r="0.63" fill="#000" opacity="0.66"/><circle cx="103.2" cy="66.9" r="0.90" fill="#000" opacity="0.40"/><circle cx="102.2" cy="74.2" r="0.95" fill="#000" opacity="0.54"/><circle cx="104.6" cy="83.1" r="1.08" fill="#000" opacity="0.37"/><circle cx="105.4" cy="75.4" r="0.58" fill="#000" opacity="0.38"/><circle cx="104.7" cy="64.0" r="0.92" fill="#000" opacity="0.43"/><circle cx="106.8" cy="72.9" r="0.57" fill="#000" opacity="0.75"/><circle cx="102.1" cy="70.4" r="0.87" fill="#000" opacity="0.79"/><circle cx="99.7" cy="77.8" r="0.89" fill="#000" opacity="0.72"/><circle cx="100.8" cy="79.1" r="0.80" fill="#000" opacity="0.42"/><circle cx="105.9" cy="82.8" r="0.45" fill="#000" opacity="0.75"/><circle cx="105.4" cy="76.9" r="0.47" fill="#000" opacity="0.76"/><circle cx="104.1" cy="78.3" r="0.42" fill="#000" opacity="0.27"/><circle cx="103.6" cy="69.4" r="0.89" fill="#000" opacity="0.66"/><circle cx="108.4" cy="78.7" r="0.65" fill="#000" opacity="0.70"/><circle cx="107.5" cy="66.5" r="0.45" fill="#000" opacity="0.73"/><circle cx="110.8" cy="69.8" r="0.47" fill="#000" opacity="0.36"/><circle cx="105.6" cy="76.9" r="0.99" fill="#000" opacity="0.70"/><circle cx="101.5" cy="69.0" r="0.84" fill="#000" opacity="0.41"/><circle cx="106.0" cy="77.3" r="0.93" fill="#000" opacity="0.36"/><circle cx="103.8" cy="80.8" r="0.41" fill="#000" opacity="0.39"/><circle cx="104.1" cy="83.8" r="0.66" fill="#000" opacity="0.43"/><circle cx="108.2" cy="74.7" r="1.00" fill="#000" opacity="0.59"/><circle cx="107.8" cy="77.0" r="0.71" fill="#000" opacity="0.68"/><circle cx="102.5" cy="82.4" r="0.78" fill="#000" opacity="0.37"/><circle cx="105.8" cy="74.3" r="0.97" fill="#000" opacity="0.34"/><circle cx="106.9" cy="76.0" r="0.93" fill="#000" opacity="0.79"/><circle cx="108.3" cy="76.2" r="0.74" fill="#000" opacity="0.69"/><circle cx="106.3" cy="81.4" r="0.64" fill="#000" opacity="0.71"/><circle cx="104.6" cy="88.0" r="0.60" fill="#000" opacity="0.37"/><circle cx="104.0" cy="70.4" r="0.48" fill="#000" opacity="0.60"/><circle cx="109.3" cy="80.3" r="0.89" fill="#000" opacity="0.68"/><circle cx="103.2" cy="72.6" r="0.68" fill="#000" opacity="0.47"/><circle cx="105.9" cy="74.7" r="1.02" fill="#000" opacity="0.26"/><circle cx="105.6" cy="79.8" r="1.03" fill="#000" opacity="0.53"/><circle cx="100.8" cy="83.1" r="0.56" fill="#000" opacity="0.50"/><circle cx="100.4" cy="74.4" r="0.93" fill="#000" opacity="0.61"/><circle cx="103.6" cy="79.6" r="0.51" fill="#000" opacity="0.71"/><circle cx="102.6" cy="69.0" r="0.52" fill="#000" opacity="0.49"/><circle cx="105.5" cy="69.5" r="0.49" fill="#000" opacity="0.50"/><circle cx="106.5" cy="73.6" r="0.53" fill="#000" opacity="0.42"/><circle cx="103.4" cy="66.8" r="0.51" fill="#000" opacity="0.34"/><circle cx="105.0" cy="80.4" r="0.77" fill="#000" opacity="0.34"/><circle cx="104.1" cy="78.9" r="1.08" fill="#000" opacity="0.65"/><circle cx="110.8" cy="83.6" r="0.47" fill="#000" opacity="0.46"/><circle cx="110.0" cy="75.1" r="0.91" fill="#000" opacity="0.49"/><circle cx="106.3" cy="82.7" r="0.47" fill="#000" opacity="0.36"/><circle cx="104.4" cy="76.8" r="0.68" fill="#000" opacity="0.69"/><circle cx="103.9" cy="70.5" r="0.84" fill="#000" opacity="0.50"/><circle cx="107.4" cy="81.3" r="0.68" fill="#000" opacity="0.66"/><circle cx="107.5" cy="73.1" r="0.80" fill="#000" opacity="0.66"/><circle cx="103.2" cy="77.7" r="0.91" fill="#000" opacity="0.73"/><circle cx="105.7" cy="68.3" r="1.00" fill="#000" opacity="0.62"/><circle cx="103.1" cy="71.7" r="0.62" fill="#000" opacity="0.60"/><circle cx="107.4" cy="79.0" r="0.95" fill="#000" opacity="0.64"/><circle cx="103.5" cy="73.2" r="0.70" fill="#000" opacity="0.50"/><circle cx="102.9" cy="72.5" r="0.87" fill="#000" opacity="0.76"/><circle cx="106.7" cy="82.7" r="0.94" fill="#000" opacity="0.46"/><circle cx="97.4" cy="76.9" r="0.43" fill="#000" opacity="0.55"/><circle cx="107.6" cy="83.4" r="1.06" fill="#000" opacity="0.54"/><circle cx="107.9" cy="79.9" r="0.78" fill="#000" opacity="0.64"/><circle cx="101.0" cy="75.5" r="0.98" fill="#000" opacity="0.54"/><circle cx="99.2" cy="82.5" r="0.55" fill="#000" opacity="0.63"/><circle cx="101.3" cy="81.3" r="0.49" fill="#000" opacity="0.79"/><circle cx="104.4" cy="77.3" r="0.59" fill="#000" opacity="0.47"/><circle cx="107.9" cy="76.4" r="0.69" fill="#000" opacity="0.63"/><circle cx="133.1" cy="77.5" r="0.66" fill="#000" opacity="0.40"/><circle cx="139.6" cy="73.2" r="0.65" fill="#000" opacity="0.42"/><circle cx="132.9" cy="76.7" r="0.59" fill="#000" opacity="0.42"/><circle cx="137.1" cy="69.7" r="0.83" fill="#000" opacity="0.33"/><circle cx="136.5" cy="85.2" r="0.75" fill="#000" opacity="0.36"/><circle cx="138.1" cy="68.3" r="0.83" fill="#000" opacity="0.23"/><circle cx="133.0" cy="74.4" r="1.08" fill="#000" opacity="0.25"/><circle cx="136.9" cy="72.5" r="0.76" fill="#000" opacity="0.22"/><circle cx="132.7" cy="76.1" r="0.50" fill="#000" opacity="0.39"/><circle cx="134.4" cy="77.9" r="0.71" fill="#000" opacity="0.30"/><circle cx="129.9" cy="77.5" r="0.96" fill="#000" opacity="0.26"/><circle cx="142.1" cy="71.6" r="0.54" fill="#000" opacity="0.43"/><circle cx="140.8" cy="71.1" r="0.60" fill="#000" opacity="0.44"/><circle cx="134.5" cy="74.5" r="0.51" fill="#000" opacity="0.48"/><circle cx="133.3" cy="72.5" r="0.57" fill="#000" opacity="0.17"/><circle cx="135.7" cy="81.9" r="0.74" fill="#000" opacity="0.18"/><circle cx="140.8" cy="71.0" r="0.62" fill="#000" opacity="0.46"/><circle cx="129.6" cy="70.6" r="0.97" fill="#000" opacity="0.46"/><circle cx="136.8" cy="67.6" r="0.64" fill="#000" opacity="0.38"/><circle cx="128.5" cy="73.7" r="0.81" fill="#000" opacity="0.46"/><circle cx="132.1" cy="73.9" r="0.66" fill="#000" opacity="0.17"/><circle cx="133.6" cy="75.1" r="0.83" fill="#000" opacity="0.17"/><circle cx="130.3" cy="75.3" r="0.88" fill="#000" opacity="0.45"/><circle cx="142.7" cy="75.3" r="0.83" fill="#000" opacity="0.33"/><circle cx="131.1" cy="68.4" r="0.76" fill="#000" opacity="0.28"/><circle cx="136.5" cy="74.6" r="0.95" fill="#000" opacity="0.36"/><circle cx="140.4" cy="76.0" r="0.98" fill="#000" opacity="0.47"/><circle cx="129.5" cy="84.9" r="0.86" fill="#000" opacity="0.30"/><circle cx="135.8" cy="74.4" r="1.00" fill="#000" opacity="0.36"/><circle cx="130.8" cy="81.8" r="0.76" fill="#000" opacity="0.30"/><circle cx="128.2" cy="73.9" r="0.65" fill="#000" opacity="0.29"/><circle cx="130.5" cy="77.4" r="1.08" fill="#000" opacity="0.23"/><circle cx="136.9" cy="71.4" r="0.85" fill="#000" opacity="0.22"/><circle cx="124.1" cy="74.6" r="0.96" fill="#000" opacity="0.42"/><circle cx="133.3" cy="78.1" r="0.71" fill="#000" opacity="0.34"/><circle cx="130.4" cy="69.8" r="0.53" fill="#000" opacity="0.39"/><circle cx="138.8" cy="71.7" r="0.53" fill="#000" opacity="0.23"/><circle cx="137.6" cy="75.1" r="1.15" fill="#000" opacity="0.35"/><circle cx="131.1" cy="69.1" r="1.14" fill="#000" opacity="0.35"/><circle cx="130.8" cy="71.2" r="0.99" fill="#000" opacity="0.35"/><circle cx="133.8" cy="72.5" r="0.97" fill="#000" opacity="0.29"/><circle cx="135.1" cy="73.2" r="0.63" fill="#000" opacity="0.13"/><circle cx="136.4" cy="66.2" r="0.96" fill="#000" opacity="0.26"/><circle cx="138.1" cy="68.7" r="0.89" fill="#000" opacity="0.22"/><circle cx="133.7" cy="79.0" r="0.72" fill="#000" opacity="0.28"/><circle cx="129.1" cy="67.8" r="0.54" fill="#000" opacity="0.34"/><circle cx="137.0" cy="75.5" r="1.07" fill="#000" opacity="0.34"/><circle cx="138.8" cy="72.9" r="0.51" fill="#000" opacity="0.27"/><circle cx="127.1" cy="69.9" r="1.19" fill="#000" opacity="0.30"/><circle cx="133.4" cy="76.0" r="0.95" fill="#000" opacity="0.20"/><circle cx="135.4" cy="75.6" r="0.50" fill="#000" opacity="0.38"/><circle cx="142.5" cy="82.2" r="0.56" fill="#000" opacity="0.45"/><circle cx="135.5" cy="75.5" r="1.00" fill="#000" opacity="0.21"/><circle cx="134.7" cy="72.4" r="0.54" fill="#000" opacity="0.41"/><circle cx="133.2" cy="67.3" r="1.01" fill="#000" opacity="0.15"/><circle cx="130.7" cy="70.5" r="0.82" fill="#000" opacity="0.47"/><circle cx="134.7" cy="85.3" r="1.00" fill="#000" opacity="0.12"/><circle cx="140.8" cy="75.5" r="1.07" fill="#000" opacity="0.15"/><circle cx="132.6" cy="81.0" r="0.62" fill="#000" opacity="0.45"/><circle cx="133.6" cy="75.1" r="0.76" fill="#000" opacity="0.34"/><circle cx="129.4" cy="77.3" r="0.60" fill="#000" opacity="0.42"/><circle cx="131.2" cy="79.4" r="0.94" fill="#000" opacity="0.28"/><circle cx="129.7" cy="79.6" r="1.16" fill="#000" opacity="0.42"/><circle cx="132.0" cy="73.6" r="0.54" fill="#000" opacity="0.49"/><circle cx="132.8" cy="67.8" r="0.73" fill="#000" opacity="0.35"/><circle cx="142.5" cy="73.9" r="0.92" fill="#000" opacity="0.24"/><circle cx="127.5" cy="78.6" r="0.76" fill="#000" opacity="0.38"/><circle cx="128.2" cy="69.9" r="1.07" fill="#000" opacity="0.23"/><circle cx="138.1" cy="75.0" r="0.80" fill="#000" opacity="0.34"/><circle cx="138.4" cy="67.3" r="0.53" fill="#000" opacity="0.44"/><circle cx="138.0" cy="67.6" r="0.90" fill="#000" opacity="0.22"/><circle cx="139.3" cy="69.2" r="0.98" fill="#000" opacity="0.47"/><circle cx="134.0" cy="76.4" r="0.89" fill="#000" opacity="0.42"/><circle cx="137.0" cy="81.3" r="1.15" fill="#000" opacity="0.21"/><circle cx="130.3" cy="71.3" r="0.83" fill="#000" opacity="0.20"/><circle cx="134.8" cy="81.7" r="1.05" fill="#000" opacity="0.29"/><circle cx="141.2" cy="78.8" r="1.04" fill="#000" opacity="0.21"/><circle cx="127.5" cy="70.9" r="1.12" fill="#000" opacity="0.32"/><circle cx="129.7" cy="75.8" r="0.63" fill="#000" opacity="0.19"/><circle cx="137.6" cy="80.6" r="0.75" fill="#000" opacity="0.33"/><circle cx="131.1" cy="77.8" r="0.60" fill="#000" opacity="0.14"/><circle cx="138.9" cy="74.9" r="0.57" fill="#000" opacity="0.36"/><circle cx="135.5" cy="72.7" r="0.92" fill="#000" opacity="0.25"/><circle cx="134.2" cy="74.9" r="0.52" fill="#000" opacity="0.50"/><circle cx="138.1" cy="71.6" r="0.90" fill="#000" opacity="0.22"/><circle cx="135.8" cy="70.9" r="1.16" fill="#000" opacity="0.41"/><circle cx="139.3" cy="65.7" r="0.68" fill="#000" opacity="0.13"/><circle cx="135.8" cy="77.4" r="0.56" fill="#000" opacity="0.14"/><circle cx="127.4" cy="72.1" r="0.82" fill="#000" opacity="0.48"/><circle cx="136.2" cy="74.2" r="0.92" fill="#000" opacity="0.27"/><circle cx="142.4" cy="81.9" r="0.68" fill="#000" opacity="0.33"/><circle cx="128.6" cy="67.3" r="0.97" fill="#000" opacity="0.27"/><circle cx="132.8" cy="75.8" r="1.18" fill="#000" opacity="0.50"/><circle cx="135.2" cy="76.1" r="0.68" fill="#000" opacity="0.25"/><circle cx="142.1" cy="70.0" r="1.09" fill="#000" opacity="0.14"/><circle cx="136.4" cy="68.9" r="0.95" fill="#000" opacity="0.49"/><circle cx="137.1" cy="75.8" r="1.03" fill="#000" opacity="0.48"/><circle cx="133.5" cy="72.0" r="0.91" fill="#000" opacity="0.41"/><circle cx="137.8" cy="77.2" r="0.68" fill="#000" opacity="0.17"/><circle cx="132.6" cy="75.3" r="0.67" fill="#000" opacity="0.17"/><circle cx="134.7" cy="74.4" r="1.00" fill="#000" opacity="0.19"/><circle cx="143.9" cy="77.1" r="0.65" fill="#000" opacity="0.47"/><circle cx="140.6" cy="68.8" r="0.60" fill="#000" opacity="0.29"/><circle cx="142.5" cy="80.3" r="1.09" fill="#000" opacity="0.36"/><circle cx="131.5" cy="76.1" r="1.08" fill="#000" opacity="0.30"/><circle cx="133.5" cy="73.4" r="0.66" fill="#000" opacity="0.14"/><circle cx="133.9" cy="70.1" r="0.60" fill="#000" opacity="0.45"/><circle cx="134.6" cy="79.1" r="0.61" fill="#000" opacity="0.22"/><circle cx="136.9" cy="71.9" r="0.62" fill="#000" opacity="0.31"/><circle cx="131.4" cy="82.9" r="0.58" fill="#000" opacity="0.49"/><circle cx="25.0" cy="107.3" r="1.17" fill="#000" opacity="0.43"/><circle cx="12.3" cy="104.5" r="0.76" fill="#000" opacity="0.42"/><circle cx="6.9" cy="114.4" r="1.50" fill="#000" opacity="0.86"/><circle cx="19.0" cy="106.1" r="1.40" fill="#000" opacity="0.33"/><circle cx="15.4" cy="100.3" r="1.48" fill="#000" opacity="0.31"/><circle cx="17.4" cy="100.2" r="0.64" fill="#000" opacity="0.30"/><circle cx="18.7" cy="99.2" r="0.69" fill="#000" opacity="0.56"/><circle cx="18.7" cy="102.3" r="1.07" fill="#000" opacity="0.38"/><circle cx="19.3" cy="111.0" r="1.21" fill="#000" opacity="0.42"/><circle cx="17.7" cy="104.9" r="1.11" fill="#000" opacity="0.60"/><circle cx="15.5" cy="107.0" r="1.11" fill="#000" opacity="0.72"/><circle cx="18.2" cy="98.5" r="0.70" fill="#000" opacity="0.34"/><circle cx="15.5" cy="99.4" r="1.22" fill="#000" opacity="0.33"/><circle cx="17.5" cy="100.2" r="1.34" fill="#000" opacity="0.82"/><circle cx="15.2" cy="104.0" r="1.41" fill="#000" opacity="0.59"/><circle cx="18.5" cy="101.4" r="0.69" fill="#000" opacity="0.80"/><circle cx="14.2" cy="106.0" r="0.87" fill="#000" opacity="0.66"/><circle cx="21.4" cy="104.2" r="0.95" fill="#000" opacity="0.61"/><circle cx="21.2" cy="108.9" r="1.32" fill="#000" opacity="0.82"/><circle cx="12.9" cy="110.4" r="0.88" fill="#000" opacity="0.75"/><circle cx="24.5" cy="107.4" r="1.45" fill="#000" opacity="0.60"/><circle cx="10.5" cy="103.5" r="1.04" fill="#000" opacity="0.31"/><circle cx="19.1" cy="103.3" r="0.68" fill="#000" opacity="0.36"/><circle cx="16.0" cy="112.3" r="0.53" fill="#000" opacity="0.36"/><circle cx="15.1" cy="101.2" r="0.52" fill="#000" opacity="0.66"/><circle cx="11.1" cy="101.5" r="1.20" fill="#000" opacity="0.36"/><circle cx="20.9" cy="98.8" r="0.55" fill="#000" opacity="0.37"/><circle cx="10.7" cy="104.2" r="0.78" fill="#000" opacity="0.37"/><circle cx="14.0" cy="105.4" r="1.09" fill="#000" opacity="0.82"/><circle cx="19.5" cy="108.7" r="1.25" fill="#000" opacity="0.40"/><circle cx="20.9" cy="94.6" r="0.89" fill="#000" opacity="0.55"/><circle cx="18.9" cy="99.4" r="0.90" fill="#000" opacity="0.86"/><circle cx="16.7" cy="100.0" r="0.74" fill="#000" opacity="0.50"/><circle cx="4.3" cy="109.0" r="1.30" fill="#000" opacity="0.85"/><circle cx="19.5" cy="96.0" r="0.55" fill="#000" opacity="0.61"/><circle cx="26.1" cy="101.3" r="0.75" fill="#000" opacity="0.55"/><circle cx="13.1" cy="100.8" r="1.03" fill="#000" opacity="0.34"/><circle cx="11.1" cy="106.2" r="0.52" fill="#000" opacity="0.38"/><circle cx="23.7" cy="102.5" r="1.44" fill="#000" opacity="0.68"/><circle cx="19.4" cy="95.3" r="1.38" fill="#000" opacity="0.32"/><circle cx="13.8" cy="101.3" r="1.18" fill="#000" opacity="0.46"/><circle cx="6.1" cy="101.3" r="1.12" fill="#000" opacity="0.45"/><circle cx="11.2" cy="103.4" r="1.45" fill="#000" opacity="0.47"/><circle cx="13.8" cy="110.1" r="0.62" fill="#000" opacity="0.66"/><circle cx="21.2" cy="102.5" r="0.77" fill="#000" opacity="0.58"/><circle cx="13.5" cy="103.5" r="0.62" fill="#000" opacity="0.38"/><circle cx="14.8" cy="108.4" r="0.79" fill="#000" opacity="0.45"/><circle cx="20.8" cy="107.0" r="1.34" fill="#000" opacity="0.67"/><circle cx="10.1" cy="101.2" r="0.70" fill="#000" opacity="0.73"/><circle cx="10.5" cy="105.4" r="1.11" fill="#000" opacity="0.58"/><circle cx="14.8" cy="107.1" r="0.72" fill="#000" opacity="0.61"/><circle cx="11.6" cy="108.0" r="0.51" fill="#000" opacity="0.51"/><circle cx="18.1" cy="101.5" r="1.06" fill="#000" opacity="0.59"/><circle cx="13.1" cy="117.0" r="0.80" fill="#000" opacity="0.76"/><circle cx="16.9" cy="105.4" r="1.37" fill="#000" opacity="0.56"/><circle cx="20.1" cy="105.7" r="0.94" fill="#000" opacity="0.74"/><circle cx="18.5" cy="106.0" r="1.46" fill="#000" opacity="0.74"/><circle cx="18.3" cy="107.4" r="0.85" fill="#000" opacity="0.71"/><circle cx="9.5" cy="98.1" r="1.32" fill="#000" opacity="0.61"/><circle cx="15.5" cy="96.6" r="1.26" fill="#000" opacity="0.59"/><circle cx="17.5" cy="97.1" r="1.41" fill="#000" opacity="0.38"/><circle cx="16.3" cy="103.7" r="1.27" fill="#000" opacity="0.65"/><circle cx="4.5" cy="104.2" r="1.07" fill="#000" opacity="0.55"/><circle cx="17.9" cy="95.1" r="1.11" fill="#000" opacity="0.53"/><circle cx="11.2" cy="105.5" r="1.22" fill="#000" opacity="0.48"/><circle cx="11.6" cy="107.6" r="0.88" fill="#000" opacity="0.49"/><circle cx="18.0" cy="95.5" r="1.00" fill="#000" opacity="0.57"/><circle cx="17.5" cy="107.5" r="0.64" fill="#000" opacity="0.65"/><circle cx="14.3" cy="103.1" r="1.42" fill="#000" opacity="0.49"/><circle cx="20.8" cy="96.8" r="1.46" fill="#000" opacity="0.42"/><circle cx="7.1" cy="108.4" r="0.51" fill="#000" opacity="0.33"/><circle cx="11.2" cy="101.9" r="1.42" fill="#000" opacity="0.76"/><circle cx="0.4" cy="100.1" r="1.02" fill="#000" opacity="0.61"/><circle cx="14.2" cy="99.9" r="0.86" fill="#000" opacity="0.66"/><circle cx="9.5" cy="112.8" r="1.18" fill="#000" opacity="0.62"/><circle cx="19.5" cy="106.5" r="0.90" fill="#000" opacity="0.64"/><circle cx="7.7" cy="99.8" r="1.46" fill="#000" opacity="0.59"/><circle cx="10.1" cy="106.3" r="1.50" fill="#000" opacity="0.51"/><circle cx="7.9" cy="102.4" r="0.67" fill="#000" opacity="0.49"/><circle cx="24.3" cy="102.9" r="1.01" fill="#000" opacity="0.37"/><circle cx="21.4" cy="99.8" r="1.32" fill="#000" opacity="0.89"/><circle cx="19.6" cy="101.0" r="0.66" fill="#000" opacity="0.47"/><circle cx="10.7" cy="103.6" r="0.69" fill="#000" opacity="0.41"/><circle cx="11.8" cy="99.5" r="0.85" fill="#000" opacity="0.90"/><circle cx="15.1" cy="103.0" r="0.91" fill="#000" opacity="0.77"/><circle cx="13.6" cy="110.5" r="0.50" fill="#000" opacity="0.48"/><circle cx="19.3" cy="99.0" r="1.17" fill="#000" opacity="0.42"/><circle cx="10.3" cy="104.1" r="0.77" fill="#000" opacity="0.69"/><circle cx="0.9" cy="101.0" r="1.07" fill="#000" opacity="0.55"/><circle cx="17.9" cy="105.8" r="1.26" fill="#000" opacity="0.36"/><circle cx="18.2" cy="105.6" r="1.02" fill="#000" opacity="0.79"/><circle cx="9.8" cy="98.7" r="0.56" fill="#000" opacity="0.31"/><circle cx="16.5" cy="100.1" r="1.22" fill="#000" opacity="0.51"/><circle cx="17.7" cy="107.1" r="0.60" fill="#000" opacity="0.84"/><circle cx="12.4" cy="101.9" r="0.95" fill="#000" opacity="0.53"/><circle cx="24.9" cy="107.2" r="1.08" fill="#000" opacity="0.88"/><circle cx="10.2" cy="106.3" r="0.75" fill="#000" opacity="0.33"/><circle cx="24.0" cy="100.3" r="0.81" fill="#000" opacity="0.84"/><circle cx="17.5" cy="100.5" r="1.10" fill="#000" opacity="0.88"/><circle cx="5.0" cy="104.3" r="0.74" fill="#000" opacity="0.53"/><circle cx="15.4" cy="100.9" r="0.81" fill="#000" opacity="0.83"/><circle cx="8.1" cy="104.8" r="0.74" fill="#000" opacity="0.40"/><circle cx="14.2" cy="106.2" r="1.47" fill="#000" opacity="0.47"/><circle cx="13.9" cy="103.2" r="1.03" fill="#000" opacity="0.53"/><circle cx="14.6" cy="104.9" r="0.62" fill="#000" opacity="0.80"/><circle cx="14.0" cy="106.7" r="0.69" fill="#000" opacity="0.47"/><circle cx="16.1" cy="105.2" r="1.16" fill="#000" opacity="0.50"/><circle cx="19.9" cy="109.8" r="0.59" fill="#000" opacity="0.46"/><circle cx="17.2" cy="102.0" r="0.94" fill="#000" opacity="0.80"/><circle cx="16.9" cy="101.5" r="0.85" fill="#000" opacity="0.73"/><circle cx="7.9" cy="111.9" r="0.71" fill="#000" opacity="0.87"/><circle cx="12.8" cy="103.9" r="0.95" fill="#000" opacity="0.38"/><circle cx="15.1" cy="100.6" r="1.40" fill="#000" opacity="0.65"/><circle cx="13.7" cy="106.5" r="1.11" fill="#000" opacity="0.43"/><circle cx="17.6" cy="102.3" r="1.01" fill="#000" opacity="0.63"/><circle cx="15.0" cy="111.7" r="0.88" fill="#000" opacity="0.69"/><circle cx="12.5" cy="102.4" r="0.89" fill="#000" opacity="0.35"/><circle cx="19.9" cy="111.9" r="0.82" fill="#000" opacity="0.70"/><circle cx="20.5" cy="107.7" r="0.86" fill="#000" opacity="0.60"/><circle cx="15.5" cy="105.6" r="0.81" fill="#000" opacity="0.44"/><circle cx="21.0" cy="109.1" r="0.78" fill="#000" opacity="0.54"/><circle cx="22.5" cy="99.8" r="1.38" fill="#000" opacity="0.82"/><circle cx="18.4" cy="106.7" r="0.53" fill="#000" opacity="0.71"/><circle cx="13.8" cy="100.4" r="0.91" fill="#000" opacity="0.70"/><circle cx="14.9" cy="100.8" r="1.35" fill="#000" opacity="0.51"/><circle cx="14.0" cy="101.9" r="0.62" fill="#000" opacity="0.85"/><circle cx="15.3" cy="96.9" r="0.54" fill="#000" opacity="0.32"/><circle cx="17.6" cy="106.5" r="0.80" fill="#000" opacity="0.53"/><circle cx="19.8" cy="104.9" r="1.14" fill="#000" opacity="0.41"/><circle cx="19.1" cy="99.1" r="1.22" fill="#000" opacity="0.45"/><circle cx="9.7" cy="106.7" r="0.85" fill="#000" opacity="0.30"/><circle cx="19.9" cy="97.3" r="0.79" fill="#000" opacity="0.33"/><circle cx="19.7" cy="99.1" r="0.55" fill="#000" opacity="0.45"/><circle cx="22.1" cy="109.1" r="0.71" fill="#000" opacity="0.85"/><circle cx="16.0" cy="102.1" r="1.19" fill="#000" opacity="0.54"/><circle cx="15.9" cy="95.5" r="0.78" fill="#000" opacity="0.35"/><circle cx="20.5" cy="102.4" r="1.43" fill="#000" opacity="0.71"/><circle cx="15.4" cy="95.6" r="1.13" fill="#000" opacity="0.57"/><circle cx="22.6" cy="106.3" r="0.93" fill="#000" opacity="0.61"/><circle cx="18.1" cy="103.0" r="1.26" fill="#000" opacity="0.33"/><circle cx="13.6" cy="96.2" r="0.76" fill="#000" opacity="0.63"/><circle cx="22.3" cy="102.8" r="1.04" fill="#000" opacity="0.45"/><circle cx="19.9" cy="105.5" r="0.91" fill="#000" opacity="0.42"/><circle cx="15.1" cy="106.3" r="1.21" fill="#000" opacity="0.70"/><circle cx="16.3" cy="107.3" r="1.02" fill="#000" opacity="0.57"/><circle cx="19.9" cy="102.4" r="0.80" fill="#000" opacity="0.83"/><circle cx="19.6" cy="108.5" r="0.83" fill="#000" opacity="0.79"/><circle cx="8.7" cy="101.7" r="0.67" fill="#000" opacity="0.70"/><circle cx="11.9" cy="101.1" r="1.27" fill="#000" opacity="0.80"/><circle cx="18.8" cy="106.5" r="0.86" fill="#000" opacity="0.42"/><circle cx="19.4" cy="105.4" r="0.70" fill="#000" opacity="0.72"/><circle cx="13.9" cy="104.7" r="0.82" fill="#000" opacity="0.58"/><circle cx="14.2" cy="106.1" r="0.57" fill="#000" opacity="0.31"/><circle cx="23.5" cy="103.6" r="0.58" fill="#000" opacity="0.73"/><circle cx="21.8" cy="103.3" r="0.61" fill="#000" opacity="0.59"/><circle cx="13.3" cy="105.2" r="1.04" fill="#000" opacity="0.30"/><circle cx="21.7" cy="100.9" r="1.13" fill="#000" opacity="0.86"/><circle cx="14.0" cy="101.2" r="0.75" fill="#000" opacity="0.38"/><circle cx="23.6" cy="105.3" r="1.34" fill="#000" opacity="0.48"/><circle cx="18.5" cy="109.9" r="1.35" fill="#000" opacity="0.86"/><circle cx="19.9" cy="110.9" r="1.33" fill="#000" opacity="0.75"/><circle cx="14.7" cy="106.5" r="1.33" fill="#000" opacity="0.49"/><circle cx="12.1" cy="108.2" r="0.87" fill="#000" opacity="0.80"/><circle cx="16.1" cy="105.3" r="1.07" fill="#000" opacity="0.68"/><circle cx="19.0" cy="97.6" r="1.41" fill="#000" opacity="0.87"/><circle cx="10.7" cy="104.2" r="0.66" fill="#000" opacity="0.48"/><circle cx="14.4" cy="103.1" r="1.19" fill="#000" opacity="0.40"/><circle cx="4.8" cy="108.2" r="0.59" fill="#000" opacity="0.32"/><circle cx="13.3" cy="105.1" r="1.22" fill="#000" opacity="0.30"/><circle cx="20.8" cy="96.6" r="1.29" fill="#000" opacity="0.56"/><path d="M37.5 95 L40.5 101" stroke="#888" stroke-width="1.5"/><circle cx="50" cy="106" r="0.6" fill="#bbb"/><circle cx="71.7" cy="108.9" r="0.86" fill="#111"/><circle cx="74.4" cy="101.1" r="0.82" fill="#111"/><circle cx="79.3" cy="112.8" r="1.05" fill="#111"/><circle cx="69.3" cy="100.1" r="0.82" fill="#111"/><circle cx="77.3" cy="101.4" r="0.70" fill="#111"/><circle cx="67.7" cy="100.8" r="0.83" fill="#111"/><circle cx="85.4" cy="114.8" r="1.03" fill="#111"/><circle cx="85.5" cy="116.1" r="0.91" fill="#111"/><circle cx="82.2" cy="94.4" r="0.94" fill="#111"/><circle cx="78.2" cy="100.1" r="0.89" fill="#111"/><circle cx="115.9" cy="104.5" r="1.19" fill="#222"/><circle cx="100.9" cy="101.2" r="1.33" fill="#222"/><circle cx="94.6" cy="97.5" r="1.21" fill="#222"/><circle cx="104.3" cy="95.0" r="1.20" fill="#222"/><circle cx="102.6" cy="106.9" r="1.05" fill="#222"/><circle cx="106.2" cy="106.6" r="1.04" fill="#222"/><circle cx="96.6" cy="97.3" r="1.33" fill="#222"/><circle cx="106.6" cy="95.7" r="1.32" fill="#222"/><circle cx="99.8" cy="95.3" r="1.12" fill="#222"/><circle cx="99.8" cy="104.7" r="1.13" fill="#222"/><circle cx="99.2" cy="106.7" r="0.87" fill="#222"/><circle cx="105.8" cy="107.1" r="0.85" fill="#222"/><circle cx="103.4" cy="94.8" r="1.06" fill="#222"/><circle cx="113.9" cy="106.2" r="1.23" fill="#222"/><circle cx="111.4" cy="95.8" r="1.39" fill="#222"/><circle cx="110.6" cy="95.5" r="1.30" fill="#222"/><circle cx="132.6" cy="97.1" r="0.88" fill="#111"/><circle cx="136.4" cy="111.6" r="0.55" fill="#111"/><circle cx="141.1" cy="94.4" r="0.59" fill="#111"/><circle cx="132.2" cy="93.4" r="0.74" fill="#111"/><circle cx="128.7" cy="100.2" r="0.78" fill="#111"/><circle cx="133.4" cy="114.3" r="0.75" fill="#111"/><circle cx="143.2" cy="106.5" r="0.87" fill="#111"/><circle cx="143.2" cy="97.0" r="0.80" fill="#111"/><circle cx="131.5" cy="111.3" r="0.77" fill="#111"/><circle cx="142.2" cy="95.9" r="0.65" fill="#111"/><circle cx="140.2" cy="115.8" r="0.79" fill="#111"/><circle cx="125.0" cy="107.5" r="0.54" fill="#111"/><circle cx="136.1" cy="112.3" r="0.55" fill="#111"/><circle cx="144.4" cy="109.2" r="0.60" fill="#111"/><circle cx="128.2" cy="103.7" r="0.84" fill="#111"/><circle cx="136.8" cy="95.7" r="0.51" fill="#111"/><circle cx="126.4" cy="112.2" r="0.57" fill="#111"/><circle cx="136.2" cy="100.0" r="0.77" fill="#111"/><circle cx="132.4" cy="96.5" r="0.85" fill="#111"/><circle cx="135.8" cy="109.5" r="0.82" fill="#111"/><circle cx="144.9" cy="93.3" r="0.64" fill="#111"/><circle cx="127.3" cy="105.0" r="0.85" fill="#111"/><circle cx="16.5" cy="130.0" r="0.51" fill="#000" opacity="0.79"/><circle cx="13.4" cy="127.4" r="0.69" fill="#000" opacity="0.39"/><circle cx="19.4" cy="127.7" r="0.92" fill="#000" opacity="0.67"/><circle cx="20.8" cy="132.6" r="0.53" fill="#000" opacity="0.84"/><circle cx="14.5" cy="130.4" r="0.50" fill="#000" opacity="0.52"/><circle cx="8.3" cy="132.1" r="0.63" fill="#000" opacity="0.51"/><circle cx="23.9" cy="131.2" r="0.60" fill="#000" opacity="0.31"/><circle cx="-1.0" cy="134.0" r="0.43" fill="#000" opacity="0.39"/><circle cx="13.7" cy="128.2" r="0.56" fill="#000" opacity="0.60"/><circle cx="15.4" cy="136.2" r="0.72" fill="#000" opacity="0.87"/><circle cx="17.6" cy="130.9" r="0.74" fill="#000" opacity="0.76"/><circle cx="23.2" cy="126.0" r="0.78" fill="#000" opacity="0.68"/><circle cx="12.8" cy="133.5" r="0.88" fill="#000" opacity="0.82"/><circle cx="24.4" cy="128.7" r="0.58" fill="#000" opacity="0.76"/><circle cx="15.5" cy="126.2" r="0.78" fill="#000" opacity="0.51"/><circle cx="10.2" cy="129.7" r="0.44" fill="#000" opacity="0.50"/><circle cx="8.0" cy="141.7" r="0.69" fill="#000" opacity="0.52"/><circle cx="16.2" cy="133.9" r="0.61" fill="#000" opacity="0.38"/><circle cx="28.1" cy="131.4" r="0.67" fill="#000" opacity="0.57"/><circle cx="11.4" cy="129.6" r="0.50" fill="#000" opacity="0.34"/><circle cx="14.4" cy="134.3" r="0.84" fill="#000" opacity="0.63"/><circle cx="21.1" cy="129.6" r="0.95" fill="#000" opacity="0.65"/><circle cx="19.3" cy="132.2" r="0.75" fill="#000" opacity="0.89"/><circle cx="9.6" cy="136.4" r="0.66" fill="#000" opacity="0.82"/><circle cx="22.3" cy="132.9" r="0.94" fill="#000" opacity="0.47"/><circle cx="15.9" cy="131.9" r="0.50" fill="#000" opacity="0.46"/><circle cx="14.8" cy="128.3" r="0.64" fill="#000" opacity="0.42"/><circle cx="6.4" cy="126.2" r="0.79" fill="#000" opacity="0.42"/><circle cx="14.4" cy="120.8" r="0.76" fill="#000" opacity="0.35"/><circle cx="20.5" cy="123.4" r="0.60" fill="#000" opacity="0.38"/><circle cx="18.8" cy="135.6" r="0.93" fill="#000" opacity="0.68"/><circle cx="19.7" cy="129.7" r="0.60" fill="#000" opacity="0.75"/><circle cx="12.4" cy="127.7" r="0.81" fill="#000" opacity="0.50"/><circle cx="21.8" cy="132.5" r="0.43" fill="#000" opacity="0.68"/><circle cx="12.5" cy="135.0" r="0.76" fill="#000" opacity="0.45"/><circle cx="15.0" cy="131.2" r="0.96" fill="#000" opacity="0.64"/><circle cx="18.0" cy="130.9" r="0.77" fill="#000" opacity="0.73"/><circle cx="14.7" cy="132.6" r="0.49" fill="#000" opacity="0.39"/><circle cx="16.3" cy="129.3" r="0.89" fill="#000" opacity="0.55"/><circle cx="8.2" cy="129.7" r="0.73" fill="#000" opacity="0.69"/><circle cx="11.7" cy="128.9" r="0.84" fill="#000" opacity="0.45"/><circle cx="13.6" cy="124.4" r="0.87" fill="#000" opacity="0.49"/><circle cx="18.3" cy="120.1" r="0.67" fill="#000" opacity="0.47"/><circle cx="1.9" cy="129.6" r="0.48" fill="#000" opacity="0.31"/><circle cx="7.3" cy="131.9" r="0.86" fill="#000" opacity="0.52"/><circle cx="20.3" cy="130.8" r="0.85" fill="#000" opacity="0.35"/><circle cx="19.2" cy="131.4" r="0.44" fill="#000" opacity="0.60"/><circle cx="12.4" cy="130.1" r="0.96" fill="#000" opacity="0.52"/><circle cx="18.2" cy="133.0" r="0.84" fill="#000" opacity="0.85"/><circle cx="16.8" cy="131.8" r="0.87" fill="#000" opacity="0.45"/><circle cx="23.0" cy="130.5" r="0.78" fill="#000" opacity="0.51"/><circle cx="18.1" cy="126.8" r="0.59" fill="#000" opacity="0.84"/><circle cx="23.6" cy="135.1" r="0.44" fill="#000" opacity="0.69"/><circle cx="6.2" cy="135.6" r="0.44" fill="#000" opacity="0.64"/><circle cx="4.6" cy="135.8" r="0.97" fill="#000" opacity="0.68"/><circle cx="16.7" cy="134.0" r="0.56" fill="#000" opacity="0.56"/><circle cx="16.5" cy="133.7" r="0.86" fill="#000" opacity="0.69"/><circle cx="10.2" cy="143.3" r="0.53" fill="#000" opacity="0.64"/><circle cx="22.6" cy="137.6" r="0.92" fill="#000" opacity="0.46"/><circle cx="16.1" cy="123.6" r="0.57" fill="#000" opacity="0.50"/><circle cx="3.4" cy="131.8" r="0.50" fill="#000" opacity="0.71"/><circle cx="10.6" cy="128.5" r="0.75" fill="#000" opacity="0.83"/><circle cx="19.1" cy="139.0" r="0.62" fill="#000" opacity="0.77"/><circle cx="18.5" cy="129.1" r="0.92" fill="#000" opacity="0.90"/><circle cx="15.6" cy="131.9" r="0.47" fill="#000" opacity="0.88"/><circle cx="29.2" cy="131.5" r="0.49" fill="#000" opacity="0.74"/><circle cx="19.0" cy="132.4" r="0.81" fill="#000" opacity="0.35"/><circle cx="8.8" cy="138.6" r="0.83" fill="#000" opacity="0.83"/><circle cx="17.5" cy="130.9" r="0.54" fill="#000" opacity="0.78"/><circle cx="15.4" cy="130.0" r="0.70" fill="#000" opacity="0.44"/><circle cx="13.4" cy="131.8" r="0.41" fill="#000" opacity="0.89"/><circle cx="11.0" cy="138.5" r="0.47" fill="#000" opacity="0.59"/><circle cx="20.2" cy="134.2" r="0.51" fill="#000" opacity="0.71"/><circle cx="21.9" cy="136.2" r="0.70" fill="#000" opacity="0.37"/><circle cx="11.7" cy="134.7" r="0.95" fill="#000" opacity="0.51"/><circle cx="19.4" cy="141.2" r="0.93" fill="#000" opacity="0.74"/><circle cx="15.5" cy="133.5" r="0.56" fill="#000" opacity="0.34"/><circle cx="22.9" cy="132.3" r="0.64" fill="#000" opacity="0.63"/><circle cx="15.4" cy="131.4" r="0.81" fill="#000" opacity="0.69"/><circle cx="8.7" cy="129.6" r="0.81" fill="#000" opacity="0.89"/><circle cx="22.7" cy="126.5" r="0.64" fill="#000" opacity="0.49"/><circle cx="1.9" cy="136.2" r="0.63" fill="#000" opacity="0.53"/><circle cx="13.2" cy="132.2" r="1.00" fill="#000" opacity="0.30"/><circle cx="5.3" cy="125.3" r="0.55" fill="#000" opacity="0.67"/><circle cx="12.8" cy="133.1" r="0.52" fill="#000" opacity="0.37"/><circle cx="21.8" cy="125.2" r="0.95" fill="#000" opacity="0.33"/><circle cx="14.2" cy="127.7" r="0.79" fill="#000" opacity="0.63"/><circle cx="9.6" cy="140.8" r="0.40" fill="#000" opacity="0.75"/><circle cx="20.3" cy="127.2" r="0.76" fill="#000" opacity="0.90"/><circle cx="16.8" cy="136.6" r="0.85" fill="#000" opacity="0.53"/><circle cx="38" cy="128" r="2.2" fill="none" stroke="#222" stroke-width="0.8"/><circle cx="43" cy="125" r="2.2" fill="none" stroke="#222" stroke-width="0.8"/><circle cx="48" cy="124" r="2.2" fill="none" stroke="#222" stroke-width="0.8"/><circle cx="53" cy="127" r="2.2" fill="none" stroke="#222" stroke-width="0.8"/><circle cx="41" cy="130" r="2.2" fill="none" stroke="#222" stroke-width="0.8"/><circle cx="46" cy="130" r="2.2" fill="none" stroke="#222" stroke-width="0.8"/><circle cx="51" cy="130" r="2.2" fill="none" stroke="#222" stroke-width="0.8"/><circle cx="56" cy="130" r="2.2" fill="none" stroke="#222" stroke-width="0.8"/><circle cx="74.6" cy="127.6" r="0.66" fill="#000" opacity="0.67"/><circle cx="73.7" cy="128.2" r="0.71" fill="#000" opacity="0.63"/><circle cx="77.4" cy="135.8" r="0.53" fill="#000" opacity="0.85"/><circle cx="66.5" cy="131.9" r="0.66" fill="#000" opacity="0.59"/><circle cx="76.6" cy="132.9" r="0.86" fill="#000" opacity="0.62"/><circle cx="68.7" cy="130.4" r="0.81" fill="#000" opacity="0.44"/><circle cx="81.2" cy="136.7" r="0.63" fill="#000" opacity="0.68"/><circle cx="81.9" cy="124.4" r="0.83" fill="#000" opacity="0.33"/><circle cx="67.7" cy="135.5" r="0.81" fill="#000" opacity="0.37"/><circle cx="78.6" cy="133.2" r="0.45" fill="#000" opacity="0.51"/><circle cx="78.4" cy="127.0" r="0.63" fill="#000" opacity="0.35"/><circle cx="59.8" cy="138.3" r="0.75" fill="#000" opacity="0.57"/><circle cx="65.4" cy="131.8" r="0.78" fill="#000" opacity="0.39"/><circle cx="73.6" cy="128.0" r="0.66" fill="#000" opacity="0.44"/><circle cx="72.2" cy="133.3" r="0.59" fill="#000" opacity="0.31"/><circle cx="78.4" cy="135.3" r="0.43" fill="#000" opacity="0.41"/><circle cx="75.0" cy="128.3" r="0.56" fill="#000" opacity="0.45"/><circle cx="77.3" cy="129.7" r="0.72" fill="#000" opacity="0.82"/><circle cx="77.9" cy="134.5" r="0.80" fill="#000" opacity="0.67"/><circle cx="74.8" cy="131.8" r="0.62" fill="#000" opacity="0.52"/><circle cx="74.8" cy="128.2" r="0.60" fill="#000" opacity="0.69"/><circle cx="78.1" cy="128.0" r="0.59" fill="#000" opacity="0.65"/><circle cx="79.5" cy="130.0" r="0.89" fill="#000" opacity="0.73"/><circle cx="69.8" cy="134.7" r="0.56" fill="#000" opacity="0.34"/><circle cx="76.2" cy="127.6" r="0.66" fill="#000" opacity="0.60"/><circle cx="84.2" cy="127.6" r="0.41" fill="#000" opacity="0.66"/><circle cx="69.5" cy="131.9" r="0.82" fill="#000" opacity="0.55"/><circle cx="63.6" cy="132.2" r="0.62" fill="#000" opacity="0.59"/><circle cx="64.8" cy="130.5" r="0.74" fill="#000" opacity="0.74"/><circle cx="74.6" cy="131.6" r="0.74" fill="#000" opacity="0.63"/><circle cx="77.2" cy="125.0" r="0.46" fill="#000" opacity="0.43"/><circle cx="85.8" cy="134.0" r="0.45" fill="#000" opacity="0.35"/><circle cx="76.2" cy="126.5" r="0.43" fill="#000" opacity="0.71"/><circle cx="74.3" cy="127.1" r="0.43" fill="#000" opacity="0.71"/><circle cx="69.1" cy="133.3" r="0.90" fill="#000" opacity="0.79"/><circle cx="78.3" cy="129.6" r="0.57" fill="#000" opacity="0.61"/><circle cx="93.9" cy="131.4" r="0.54" fill="#000" opacity="0.46"/><circle cx="74.2" cy="133.5" r="0.83" fill="#000" opacity="0.63"/><circle cx="69.8" cy="130.7" r="0.43" fill="#000" opacity="0.48"/><circle cx="83.2" cy="126.3" r="0.83" fill="#000" opacity="0.45"/><circle cx="76.6" cy="132.1" r="0.67" fill="#000" opacity="0.52"/><circle cx="69.2" cy="131.9" r="0.69" fill="#000" opacity="0.52"/><circle cx="77.3" cy="128.8" r="0.86" fill="#000" opacity="0.63"/><circle cx="80.9" cy="132.0" r="0.67" fill="#000" opacity="0.55"/><circle cx="71.1" cy="129.8" r="0.54" fill="#000" opacity="0.78"/><circle cx="73.6" cy="136.3" r="0.80" fill="#000" opacity="0.66"/><circle cx="62.5" cy="133.3" r="0.62" fill="#000" opacity="0.83"/><circle cx="82.0" cy="132.3" r="0.72" fill="#000" opacity="0.33"/><circle cx="77.5" cy="130.0" r="0.70" fill="#000" opacity="0.41"/><circle cx="82.8" cy="128.9" r="0.80" fill="#000" opacity="0.60"/><circle cx="71.9" cy="126.3" r="0.55" fill="#000" opacity="0.43"/><circle cx="77.8" cy="129.3" r="0.86" fill="#000" opacity="0.42"/><circle cx="78.2" cy="131.9" r="0.79" fill="#000" opacity="0.87"/><circle cx="68.4" cy="133.6" r="0.53" fill="#000" opacity="0.84"/><circle cx="74.6" cy="129.1" r="0.43" fill="#000" opacity="0.72"/><circle cx="87.0" cy="132.7" r="0.55" fill="#000" opacity="0.44"/><circle cx="71.4" cy="129.5" r="0.68" fill="#000" opacity="0.39"/><circle cx="80.5" cy="129.4" r="0.82" fill="#000" opacity="0.39"/><circle cx="81.1" cy="121.7" r="0.60" fill="#000" opacity="0.32"/><circle cx="69.7" cy="134.4" r="0.51" fill="#000" opacity="0.63"/><circle cx="81.6" cy="133.2" r="0.76" fill="#000" opacity="0.56"/><circle cx="74.7" cy="129.4" r="0.81" fill="#000" opacity="0.37"/><circle cx="93.7" cy="125.6" r="0.87" fill="#000" opacity="0.62"/><circle cx="74.6" cy="134.1" r="0.78" fill="#000" opacity="0.60"/><circle cx="78.4" cy="130.3" r="0.64" fill="#000" opacity="0.82"/><circle cx="69.9" cy="128.5" r="0.44" fill="#000" opacity="0.38"/><circle cx="74.3" cy="138.3" r="0.82" fill="#000" opacity="0.44"/><circle cx="77.4" cy="130.6" r="0.70" fill="#000" opacity="0.88"/><circle cx="67.9" cy="138.0" r="0.73" fill="#000" opacity="0.33"/><circle cx="72.7" cy="134.3" r="0.52" fill="#000" opacity="0.75"/><circle cx="80.6" cy="136.6" r="0.55" fill="#000" opacity="0.34"/><circle cx="73.5" cy="130.4" r="0.68" fill="#000" opacity="0.77"/><circle cx="70.5" cy="128.8" r="0.42" fill="#000" opacity="0.61"/><circle cx="83.1" cy="133.9" r="0.47" fill="#000" opacity="0.65"/><circle cx="72.5" cy="133.7" r="0.73" fill="#000" opacity="0.40"/><circle cx="82.9" cy="138.3" r="0.57" fill="#000" opacity="0.81"/><circle cx="80.8" cy="128.1" r="0.47" fill="#000" opacity="0.36"/><circle cx="78.2" cy="129.8" r="0.65" fill="#000" opacity="0.62"/><circle cx="81.0" cy="133.6" r="0.48" fill="#000" opacity="0.62"/><circle cx="70.3" cy="130.9" r="0.50" fill="#000" opacity="0.54"/><circle cx="105.9" cy="132.0" r="0.54" fill="#000" opacity="0.84"/><circle cx="92.4" cy="129.9" r="0.41" fill="#000" opacity="0.87"/><circle cx="94.4" cy="130.5" r="0.74" fill="#000" opacity="0.74"/><circle cx="106.3" cy="136.6" r="0.49" fill="#000" opacity="0.53"/><circle cx="110.9" cy="130.8" r="0.71" fill="#000" opacity="0.55"/><circle cx="106.9" cy="128.9" r="0.75" fill="#000" opacity="0.52"/><circle cx="96.3" cy="126.1" r="0.83" fill="#000" opacity="0.43"/><circle cx="105.2" cy="135.4" r="0.99" fill="#000" opacity="0.42"/><circle cx="98.2" cy="125.8" r="0.89" fill="#000" opacity="0.57"/><circle cx="107.5" cy="125.9" r="0.95" fill="#000" opacity="0.41"/><circle cx="110.8" cy="128.5" r="0.64" fill="#000" opacity="0.44"/><circle cx="105.3" cy="136.5" r="0.81" fill="#000" opacity="0.48"/><circle cx="103.2" cy="131.8" r="0.52" fill="#000" opacity="0.51"/><circle cx="97.0" cy="139.5" r="1.00" fill="#000" opacity="0.80"/><circle cx="98.0" cy="130.6" r="0.87" fill="#000" opacity="0.85"/><circle cx="105.1" cy="124.3" r="0.52" fill="#000" opacity="0.71"/><circle cx="111.0" cy="124.2" r="0.46" fill="#000" opacity="0.76"/><circle cx="102.9" cy="131.9" r="0.98" fill="#000" opacity="0.74"/><circle cx="104.9" cy="127.8" r="0.90" fill="#000" opacity="0.87"/><circle cx="113.2" cy="126.3" r="0.90" fill="#000" opacity="0.80"/><circle cx="99.6" cy="127.7" r="0.90" fill="#000" opacity="0.79"/><circle cx="108.5" cy="127.6" r="0.98" fill="#000" opacity="0.67"/><circle cx="107.8" cy="129.3" r="0.98" fill="#000" opacity="0.79"/><circle cx="104.9" cy="137.6" r="0.54" fill="#000" opacity="0.50"/><circle cx="100.7" cy="130.8" r="0.70" fill="#000" opacity="0.85"/><circle cx="101.3" cy="124.2" r="0.64" fill="#000" opacity="0.79"/><circle cx="107.5" cy="124.2" r="0.97" fill="#000" opacity="0.81"/><circle cx="102.9" cy="130.9" r="0.79" fill="#000" opacity="0.82"/><circle cx="100.7" cy="134.5" r="0.90" fill="#000" opacity="0.80"/><circle cx="112.0" cy="130.1" r="0.41" fill="#000" opacity="0.46"/><circle cx="107.4" cy="126.1" r="0.76" fill="#000" opacity="0.63"/><circle cx="102.9" cy="132.4" r="0.61" fill="#000" opacity="0.82"/><circle cx="101.3" cy="127.7" r="0.45" fill="#000" opacity="0.54"/><circle cx="103.0" cy="125.9" r="0.80" fill="#000" opacity="0.80"/><circle cx="111.6" cy="134.2" r="0.42" fill="#000" opacity="0.81"/><circle cx="106.9" cy="132.9" r="0.97" fill="#000" opacity="0.58"/><circle cx="107.0" cy="138.3" r="0.77" fill="#000" opacity="0.85"/><circle cx="99.4" cy="132.9" r="0.97" fill="#000" opacity="0.65"/><circle cx="108.9" cy="129.8" r="0.90" fill="#000" opacity="0.48"/><circle cx="104.8" cy="130.0" r="0.51" fill="#000" opacity="0.87"/><circle cx="94.5" cy="132.1" r="0.55" fill="#000" opacity="0.58"/><circle cx="111.1" cy="133.0" r="0.92" fill="#000" opacity="0.66"/><circle cx="95.1" cy="136.4" r="0.94" fill="#000" opacity="0.73"/><circle cx="112.5" cy="132.6" r="0.67" fill="#000" opacity="0.88"/><circle cx="99.3" cy="134.5" r="0.78" fill="#000" opacity="0.59"/><circle cx="96.1" cy="129.2" r="0.94" fill="#000" opacity="0.65"/><circle cx="94.3" cy="138.3" r="0.43" fill="#000" opacity="0.82"/><circle cx="101.9" cy="125.3" r="0.67" fill="#000" opacity="0.78"/><circle cx="112.5" cy="125.9" r="0.85" fill="#000" opacity="0.42"/><circle cx="103.5" cy="131.9" r="0.97" fill="#000" opacity="0.85"/><circle cx="109.9" cy="134.2" r="0.75" fill="#000" opacity="0.42"/><circle cx="97.2" cy="134.2" r="0.78" fill="#000" opacity="0.54"/><circle cx="105.4" cy="126.7" r="0.73" fill="#000" opacity="0.61"/><circle cx="113.6" cy="129.2" r="0.88" fill="#000" opacity="0.74"/><circle cx="93.7" cy="137.0" r="0.83" fill="#000" opacity="0.75"/><circle cx="104.4" cy="132.3" r="0.75" fill="#000" opacity="0.81"/><circle cx="106.5" cy="126.4" r="0.48" fill="#000" opacity="0.66"/><circle cx="107.6" cy="128.3" r="0.84" fill="#000" opacity="0.49"/><circle cx="104.2" cy="131.2" r="0.58" fill="#000" opacity="0.59"/><circle cx="120.0" cy="127.9" r="0.51" fill="#000" opacity="0.55"/><circle cx="108.7" cy="129.1" r="0.59" fill="#000" opacity="0.62"/><circle cx="108.6" cy="132.0" r="0.64" fill="#000" opacity="0.59"/><circle cx="109.6" cy="129.3" r="0.52" fill="#000" opacity="0.85"/><circle cx="94.1" cy="132.3" r="0.78" fill="#000" opacity="0.79"/><circle cx="103.6" cy="132.1" r="0.85" fill="#000" opacity="0.64"/><circle cx="96.7" cy="127.8" r="0.85" fill="#000" opacity="0.54"/><circle cx="96.3" cy="136.8" r="0.72" fill="#000" opacity="0.54"/><circle cx="101.8" cy="127.7" r="0.86" fill="#000" opacity="0.42"/><circle cx="108.6" cy="125.4" r="0.61" fill="#000" opacity="0.87"/><circle cx="104.6" cy="133.0" r="0.44" fill="#000" opacity="0.67"/><circle cx="105.2" cy="124.0" r="0.65" fill="#000" opacity="0.80"/><circle cx="108.9" cy="132.2" r="0.79" fill="#000" opacity="0.88"/><circle cx="98.9" cy="125.4" r="0.86" fill="#000" opacity="0.60"/><circle cx="114.2" cy="127.6" r="0.61" fill="#000" opacity="0.60"/><circle cx="106.9" cy="126.5" r="0.51" fill="#000" opacity="0.84"/><circle cx="97.9" cy="129.0" r="0.80" fill="#000" opacity="0.85"/><circle cx="108.6" cy="132.7" r="0.44" fill="#000" opacity="0.61"/><circle cx="93.3" cy="129.9" r="0.80" fill="#000" opacity="0.69"/><circle cx="98.6" cy="133.0" r="0.56" fill="#000" opacity="0.82"/><circle cx="107.7" cy="122.6" r="0.49" fill="#000" opacity="0.74"/><circle cx="105.2" cy="125.3" r="0.94" fill="#000" opacity="0.85"/><circle cx="104.5" cy="122.6" r="0.79" fill="#000" opacity="0.84"/><circle cx="111.4" cy="134.6" r="0.82" fill="#000" opacity="0.71"/><circle cx="104.6" cy="131.5" r="0.76" fill="#000" opacity="0.81"/><circle cx="104.4" cy="132.7" r="0.53" fill="#000" opacity="0.45"/><circle cx="97.7" cy="120.3" r="0.88" fill="#000" opacity="0.58"/><circle cx="104.3" cy="128.5" r="0.90" fill="#000" opacity="0.56"/><circle cx="113.5" cy="130.1" r="0.48" fill="#000" opacity="0.54"/><circle cx="111.1" cy="131.6" r="0.73" fill="#000" opacity="0.80"/><circle cx="115.9" cy="131.8" r="0.47" fill="#000" opacity="0.51"/><circle cx="101.2" cy="127.4" r="0.60" fill="#000" opacity="0.68"/><circle cx="107.1" cy="137.0" r="0.53" fill="#000" opacity="0.82"/><circle cx="107.7" cy="125.4" r="0.42" fill="#000" opacity="0.79"/><circle cx="112.0" cy="130.8" r="0.65" fill="#000" opacity="0.43"/><circle cx="98.4" cy="125.3" r="0.75" fill="#000" opacity="0.60"/><circle cx="97.0" cy="129.6" r="0.54" fill="#000" opacity="0.83"/><circle cx="115.8" cy="129.8" r="0.98" fill="#000" opacity="0.56"/><circle cx="107.3" cy="129.9" r="0.69" fill="#000" opacity="0.47"/><circle cx="96.3" cy="131.7" r="0.83" fill="#000" opacity="0.63"/><circle cx="102.9" cy="132.2" r="0.64" fill="#000" opacity="0.54"/><circle cx="108.4" cy="136.1" r="0.71" fill="#000" opacity="0.62"/><circle cx="108.0" cy="135.9" r="0.52" fill="#000" opacity="0.53"/><circle cx="96.3" cy="127.7" r="0.98" fill="#000" opacity="0.77"/><circle cx="117.8" cy="127.1" r="0.83" fill="#000" opacity="0.76"/><circle cx="108.8" cy="131.0" r="0.41" fill="#000" opacity="0.83"/><circle cx="103.5" cy="124.4" r="0.56" fill="#000" opacity="0.58"/><circle cx="109.4" cy="134.8" r="0.99" fill="#000" opacity="0.55"/><circle cx="108.6" cy="130.7" r="0.61" fill="#000" opacity="0.85"/><circle cx="107.2" cy="125.8" r="0.46" fill="#000" opacity="0.45"/><circle cx="110.9" cy="135.7" r="0.68" fill="#000" opacity="0.90"/>
</svg>
<svg style="left:524px;top:118px;" width="150" height="131" viewBox="0 0 150 131"><path d="M89.79999999999995 29.599999999999994 L81.79999999999995 29.599999999999994 L89.79999999999995 21.599999999999994 Z" fill="#5a6fd8"/><path d="M119.60000000000002 29.599999999999994 L113.60000000000002 29.599999999999994 L119.60000000000002 23.599999999999994 Z" fill="#5a6fd8"/><path d="M113.10000000000002 26.099999999999994 H118.10000000000002 M115.60000000000002 23.599999999999994 V28.599999999999994" stroke="#000" stroke-width="1.1"/><path d="M149 29.599999999999994 L143 29.599999999999994 L149 23.599999999999994 Z" fill="#5a6fd8"/><path d="M142.5 26.099999999999994 H147.5 M145 23.599999999999994 V28.599999999999994" stroke="#000" stroke-width="1.1"/><path d="M30.399999999999977 59.400000000000006 L24.399999999999977 59.400000000000006 L30.399999999999977 53.400000000000006 Z" fill="#5a6fd8"/><path d="M23.899999999999977 55.900000000000006 H28.899999999999977 M26.399999999999977 53.400000000000006 V58.400000000000006" stroke="#000" stroke-width="1.1"/><path d="M60.200000000000045 59.400000000000006 L54.200000000000045 59.400000000000006 L60.200000000000045 53.400000000000006 Z" fill="#5a6fd8"/><path d="M53.700000000000045 55.900000000000006 H58.700000000000045 M56.200000000000045 53.400000000000006 V58.400000000000006" stroke="#000" stroke-width="1.1"/><path d="M89.79999999999995 59.400000000000006 L83.79999999999995 59.400000000000006 L89.79999999999995 53.400000000000006 Z" fill="#5a6fd8"/><path d="M83.29999999999995 55.900000000000006 H88.29999999999995 M85.79999999999995 53.400000000000006 V58.400000000000006" stroke="#000" stroke-width="1.1"/><path d="M119.60000000000002 59.400000000000006 L113.60000000000002 59.400000000000006 L119.60000000000002 53.400000000000006 Z" fill="#5a6fd8"/><path d="M113.10000000000002 55.900000000000006 H118.10000000000002 M115.60000000000002 53.400000000000006 V58.400000000000006" stroke="#000" stroke-width="1.1"/><path d="M149 59.400000000000006 L143 59.400000000000006 L149 53.400000000000006 Z" fill="#5a6fd8"/><path d="M142.5 55.900000000000006 H147.5 M145 53.400000000000006 V58.400000000000006" stroke="#000" stroke-width="1.1"/><path d="M30.399999999999977 89.30000000000001 L24.399999999999977 89.30000000000001 L30.399999999999977 83.30000000000001 Z" fill="#5a6fd8"/><path d="M23.899999999999977 85.80000000000001 H28.899999999999977 M26.399999999999977 83.30000000000001 V88.30000000000001" stroke="#000" stroke-width="1.1"/><path d="M60.200000000000045 89.30000000000001 L54.200000000000045 89.30000000000001 L60.200000000000045 83.30000000000001 Z" fill="#e05050"/><path d="M53.700000000000045 85.80000000000001 H58.700000000000045 M56.200000000000045 83.30000000000001 V88.30000000000001" stroke="#000" stroke-width="1.1"/><path d="M89.79999999999995 89.30000000000001 L83.79999999999995 89.30000000000001 L89.79999999999995 83.30000000000001 Z" fill="#e05050"/><path d="M83.29999999999995 85.80000000000001 H88.29999999999995 M85.79999999999995 83.30000000000001 V88.30000000000001" stroke="#000" stroke-width="1.1"/><path d="M119.60000000000002 89.30000000000001 L113.60000000000002 89.30000000000001 L119.60000000000002 83.30000000000001 Z" fill="#e05050"/><path d="M113.10000000000002 85.80000000000001 H118.10000000000002 M115.60000000000002 83.30000000000001 V88.30000000000001" stroke="#000" stroke-width="1.1"/><path d="M149 89.30000000000001 L143 89.30000000000001 L149 83.30000000000001 Z" fill="#e05050"/><path d="M142.5 85.80000000000001 H147.5 M145 83.30000000000001 V88.30000000000001" stroke="#000" stroke-width="1.1"/><path d="M30.399999999999977 118.9 L24.399999999999977 118.9 L30.399999999999977 112.9 Z" fill="#e05050"/><path d="M23.899999999999977 115.4 H28.899999999999977 M26.399999999999977 112.9 V117.9" stroke="#000" stroke-width="1.1"/><path d="M60.200000000000045 118.9 L52.200000000000045 118.9 L60.200000000000045 110.9 Z" fill="#e05050"/><path d="M83.29999999999995 115.4 H88.29999999999995 M85.79999999999995 112.9 V117.9" stroke="#000" stroke-width="1.1"/><path d="M113.10000000000002 115.4 H118.10000000000002 M115.60000000000002 112.9 V117.9" stroke="#000" stroke-width="1.1"/></svg>
<div style="left:525px;top:251px;width:170px;height:20px;background:#282828;border-radius:4px"></div>
<div class="t" style="left:533px;top:256px;font-size:11.5px;color:#dcdcdc;letter-spacing:0.3px">Basic,</div>
<svg style="left:674px;top:255px;" width="16" height="10" viewBox="0 0 16 10"><path d="M2 2 L8 8 L14 2" fill="none" stroke="#dcdcdc" stroke-width="2"/></svg>
<div style="left:525px;top:273px;width:170px;height:22px;background:#262626;border:1px solid #1f1f1f;border-radius:4px;overflow:hidden"><div style="left:16px;top:0px;width:117px;height:22px;background:#4a4a4a"></div><div style="left:132px;top:0px;width:1px;height:22px;background:#2a2a2a"></div><div style="left:133px;top:0px;width:18px;height:22px;background:#3a3a3a"></div><div style="left:151px;top:0px;width:1px;height:22px;background:#2a2a2a"></div><div style="left:152px;top:0px;width:18px;height:22px;background:#3a3a3a"></div></div>
<div class="t" style="left:531px;top:279.0px;font-size:10.5px;color:#dcdcdc">间距</div>
<div class="t" style="right:47px;top:278px;font-size:11.5px;color:#dcdcdc;letter-spacing:-0.4px">10.0</div>
<div style="left:660px;top:282.7px;width:12px;height:2.6px;background:#e0e0e0;border-radius:1px"></div>
<div style="left:679px;top:282.7px;width:13px;height:2.6px;background:#e0e0e0;border-radius:1px"></div>
<div style="left:684.2px;top:277.5px;width:2.6px;height:13px;background:#e0e0e0;border-radius:1px"></div>
<svg style="left:523px;top:298px;" width="175" height="22" viewBox="0 0 175 22">
<g fill="#dcdcdc">
<rect x="8" y="4.6" width="7" height="2"/><rect x="8" y="9" width="5" height="2"/><rect x="8" y="14.6" width="11" height="2"/>
</g>
<path d="M14.5 13 L21.5 6" stroke="#dcdcdc" stroke-width="2.6"/>
<path d="M13.2 14.3 L14 12.2 L15.4 13.6 Z" fill="#dcdcdc"/>
<path d="M37 8.5 V17.5 H48.5 V6.3 L45.8 3.3 H41" fill="none" stroke="#dcdcdc" stroke-width="1.6"/>
<path d="M33.2 6 H40 M36.6 2.6 V9.4" stroke="#dcdcdc" stroke-width="1.9"/>
<rect x="66.5" y="5.5" width="8" height="6.5" fill="none" stroke="#dcdcdc" stroke-width="1.4"/>
<path d="M76.5 9.5 H79.5 V15.5 H71 V14" fill="none" stroke="#dcdcdc" stroke-width="1.4"/>
<rect x="95" y="3.5" width="14" height="14" fill="#555"/><path d="M98 6.5 L106 14.5 M106 6.5 L98 14.5" stroke="#3b3b3b" stroke-width="2.2"/>
<path d="M134.5 6 A5.2 5.2 0 1 0 135.5 13" fill="none" stroke="#dcdcdc" stroke-width="2.2"/><path d="M132.5 3 L138.8 6.5 L132.5 9.5 Z" fill="#dcdcdc"/>
<path d="M153 12 V3 H159.5 L162.5 6 V12 Z" fill="#5a5a5a"/><path d="M150.5 11.5 H165 V17.5 H150.5 Z" fill="#5a5a5a"/><path d="M152.5 12 L163 12" stroke="#3b3b3b" stroke-width="1"/>
</svg>
<svg style="left:602px;top:324px;" width="20" height="6" viewBox="0 0 20 6"><circle cx="3" cy="3" r="1.3" fill="#aaa"/><circle cx="8" cy="3" r="1.3" fill="#aaa"/><circle cx="13" cy="3" r="1.3" fill="#aaa"/></svg>
<div style="left:523px;top:360px;width:174px;height:1px;background:#2b2b2b"></div>
<div style="left:528px;top:332px;width:30px;height:28px;background:#1f1f1f"></div>
<div style="left:528px;top:356px;width:30px;height:4px;background:#555"></div>
<div style="left:562px;top:332px;width:29px;height:28px;border:1px solid #282828;border-bottom:none"></div>
<div style="left:595px;top:332px;width:29px;height:28px;border:1px solid #282828;border-bottom:none"></div>
<svg style="left:523px;top:332px;" width="175" height="28" viewBox="0 0 175 28">
<path d="M13 6 L26 6 L22 10 L9 10 Z M13 12 L26 12 L22 16 L9 16 Z M13 18 L26 18 L22 22 L9 22 Z" fill="#dcdcdc"/>
<rect x="47.5" y="7.5" width="13" height="13" fill="none" stroke="#dcdcdc" stroke-width="1.4"/>
<rect x="51" y="10" width="1.5" height="8" fill="#dcdcdc"/><rect x="53.5" y="10" width="1.5" height="8" fill="#dcdcdc"/><rect x="56" y="10" width="1.5" height="8" fill="#dcdcdc"/>
<rect x="79" y="11.8" width="14" height="1.6" fill="#dcdcdc"/>
<rect x="78.8" y="10.8" width="3.4" height="3.6" fill="#dcdcdc"/><rect x="89.6" y="10.8" width="3.4" height="3.6" fill="#dcdcdc"/><rect x="84.5" y="10.8" width="3" height="3.6" fill="#dcdcdc"/>
<path d="M80.8 19.8 C81.5 13.8 90.5 13.8 91.5 19.8" fill="none" stroke="#dcdcdc" stroke-width="2" stroke-linecap="round"/>
<rect x="159.5" y="9.5" width="9" height="8" fill="none" stroke="#dcdcdc" stroke-width="1"/>
<path d="M166 11 L161.5 13.5 L166 16 Z" fill="#dcdcdc"/>
</svg>
<div style="left:525px;top:364px;width:135px;height:21px;background:#2a2a2a;border:1px solid #222;border-radius:4px"></div>
<div class="t" style="left:529px;top:370.0px;font-size:10.5px;color:#dcdcdc">模式</div>
<div class="t" style="left:617px;top:370.0px;font-size:10.5px;color:#dcdcdc">正常</div>
<svg style="left:645px;top:371px;" width="11" height="7" viewBox="0 0 11 7"><path d="M0 0 H10 L5 6 Z" fill="#dcdcdc"/></svg>
<div style="left:662px;top:364px;width:33px;height:21px;background:#2a2a2a;border:1px solid #222;border-radius:4px"></div>
<svg style="left:663px;top:366px;" width="32" height="18" viewBox="0 0 32 18"><g transform="translate(2 1) scale(0.88)"><g transform="translate(0 0)"><path d="M4.2 5.4 A5.5 5.5 0 1 1 7.2 13.3" fill="none" stroke="#dcdcdc" stroke-width="2"/><path d="M0.8 8.6 L2.3 3.4 L6.6 6.6 Z" fill="#dcdcdc"/><circle cx="4.4" cy="12.9" r="2" fill="#dcdcdc"/></g></g><path d="M18 6 H28 L23 11.5 Z" fill="#dcdcdc"/></svg>
<div style="left:525px;top:388px;width:170px;height:22px;background:#2a2a2a;border:1px solid #222;border-radius:4px;overflow:hidden"><div style="left:133px;top:0px;width:18px;height:22px;background:#3a3a3a"></div><div style="left:151px;top:0px;width:1px;height:22px;background:#2a2a2a"></div><div style="left:152px;top:0px;width:18px;height:22px;background:#3a3a3a"></div></div>
<div class="t" style="left:531px;top:394.0px;font-size:10.5px;color:#dcdcdc">不透明度</div>
<div class="t" style="right:47px;top:393px;font-size:11.5px;color:#dcdcdc;letter-spacing:-0.4px">100.0</div>
<div style="left:660px;top:397.7px;width:12px;height:2.6px;background:#e0e0e0;border-radius:1px"></div>
<div style="left:679px;top:397.7px;width:13px;height:2.6px;background:#666;border-radius:1px"></div>
<div style="left:684.2px;top:392.5px;width:2.6px;height:13px;background:#666;border-radius:1px"></div>
<div style="left:525px;top:412px;width:171px;height:111px;background:#252525"></div>
<div style="left:525px;top:412px;width:171px;height:33px;background:#3b3b3b"></div>
<div style="left:525px;top:412px;width:171px;height:1px;background:#474747"></div>
<div style="left:525px;top:412px;width:1px;height:33px;background:#474747"></div>
<div style="left:551px;top:413px;width:1px;height:32px;background:#474747"></div>
<div style="left:577px;top:413px;width:1px;height:32px;background:#474747"></div>
<div style="left:603px;top:413px;width:1px;height:32px;background:#474747"></div>
<div style="left:525px;top:445px;width:171px;height:24px;background:#333"></div>
<svg style="left:525px;top:412px;" width="171" height="57" viewBox="0 0 171 57"><path d="M6.9 17.7 C9.9 11.7 17.9 11.7 20.9 17.7 C17.9 23.7 9.9 23.7 6.9 17.7 Z" fill="#dcdcdc"/><circle cx="13.9" cy="17.7" r="2.7" fill="#2a2a2a"/><circle cx="13.0" cy="16.8" r="1.2" fill="#dcdcdc"/><path d="M6.9 45.3 C9.9 39.3 17.9 39.3 20.9 45.3 C17.9 51.3 9.9 51.3 6.9 45.3 Z" fill="#dcdcdc"/><circle cx="13.9" cy="45.3" r="2.7" fill="#2a2a2a"/><circle cx="13.0" cy="44.4" r="1.2" fill="#dcdcdc"/><rect x="34.3" y="13" width="12" height="8.5" fill="#dcdcdc"/><path d="M36.8 13.5 V11.5 A3.5 3.5 0 0 1 43.8 11.5 V13.5" fill="none" stroke="#dcdcdc" stroke-width="2"/><path d="M66 11 C64 10.5 63 11.5 62.5 13.5 L61.2 20.5 C60.8 22.5 59.8 23 58.5 22.5" fill="none" stroke="#dcdcdc" stroke-width="1.7"/><path d="M59.5 15 H65" stroke="#dcdcdc" stroke-width="1.6"/><path d="M66.5 15 L72 21.5 M72 15 L66.5 21.5" stroke="#dcdcdc" stroke-width="2"/></svg>
<div style="left:621px;top:446px;width:32px;height:22px;background:#fff"></div>
<svg style="left:623px;top:448px;" width="28" height="18" viewBox="0 0 28 18"><rect x="0.0" y="0.0" width="4.6" height="4.6" fill="#999"/><rect x="0.0" y="4.5" width="4.6" height="4.6" fill="#666"/><rect x="0.0" y="9.0" width="4.6" height="4.6" fill="#999"/><rect x="0.0" y="13.5" width="4.6" height="4.6" fill="#666"/><rect x="0.0" y="18.0" width="4.6" height="4.6" fill="#999"/><rect x="4.5" y="0.0" width="4.6" height="4.6" fill="#666"/><rect x="4.5" y="4.5" width="4.6" height="4.6" fill="#999"/><rect x="4.5" y="9.0" width="4.6" height="4.6" fill="#666"/><rect x="4.5" y="13.5" width="4.6" height="4.6" fill="#999"/><rect x="4.5" y="18.0" width="4.6" height="4.6" fill="#666"/><rect x="9.0" y="0.0" width="4.6" height="4.6" fill="#999"/><rect x="9.0" y="4.5" width="4.6" height="4.6" fill="#666"/><rect x="9.0" y="9.0" width="4.6" height="4.6" fill="#999"/><rect x="9.0" y="13.5" width="4.6" height="4.6" fill="#666"/><rect x="9.0" y="18.0" width="4.6" height="4.6" fill="#999"/><rect x="13.5" y="0.0" width="4.6" height="4.6" fill="#666"/><rect x="13.5" y="4.5" width="4.6" height="4.6" fill="#999"/><rect x="13.5" y="9.0" width="4.6" height="4.6" fill="#666"/><rect x="13.5" y="13.5" width="4.6" height="4.6" fill="#999"/><rect x="13.5" y="18.0" width="4.6" height="4.6" fill="#666"/><rect x="18.0" y="0.0" width="4.6" height="4.6" fill="#999"/><rect x="18.0" y="4.5" width="4.6" height="4.6" fill="#666"/><rect x="18.0" y="9.0" width="4.6" height="4.6" fill="#999"/><rect x="18.0" y="13.5" width="4.6" height="4.6" fill="#666"/><rect x="18.0" y="18.0" width="4.6" height="4.6" fill="#999"/><rect x="22.5" y="0.0" width="4.6" height="4.6" fill="#666"/><rect x="22.5" y="4.5" width="4.6" height="4.6" fill="#999"/><rect x="22.5" y="9.0" width="4.6" height="4.6" fill="#666"/><rect x="22.5" y="13.5" width="4.6" height="4.6" fill="#999"/><rect x="22.5" y="18.0" width="4.6" height="4.6" fill="#666"/><rect x="27.0" y="0.0" width="4.6" height="4.6" fill="#999"/><rect x="27.0" y="4.5" width="4.6" height="4.6" fill="#666"/><rect x="27.0" y="9.0" width="4.6" height="4.6" fill="#999"/><rect x="27.0" y="13.5" width="4.6" height="4.6" fill="#666"/><rect x="27.0" y="18.0" width="4.6" height="4.6" fill="#999"/><g transform="scale(0.2142)">
<path d="M17 41 L113.8 40.6 L113.8 41.8 L17 42 Z" fill="#7fbf6a" opacity="0.8"/>
<path d="M17 62 L111 61.6 L111 62.8 L17 63 Z" fill="#7fbf6a" opacity="0.8"/>
<g fill="#5aa83a">
<path d="M40.8 43 C44 39 50 35 55 33 C58 31.5 60 30 62.3 30 C65 30.5 67 33 70 35 C75 38 80 41 86 43 Z"/>
<circle cx="62.3" cy="23.8" r="2.4"/>
<path d="M59 9.7 L60.3 9.5 L62.8 20.4 L61.6 20.6 Z"/>
<path d="M43 21.5 L44.5 21.3 L48.8 33.3 L47.2 33.5 Z"/>
<circle cx="39" cy="15.5" r="2"/>
<path d="M26 32 L32 34 L31.5 35 L25.5 33 Z"/><path d="M34 36 L42 38 L41.5 39.2 L33.5 37.2 Z"/><path d="M30 38.5 L36 39.5 L36 40.5 L30 39.5 Z"/>
<path d="M36 63 C42 60 55 59.5 70 60 C82 60.5 92 62 96.6 64 C94 67 92 70 88 72 C82 76 72 77.5 60 77 C50 76.5 42 74.5 36 72 L22 76.5 L20.3 75.2 L33 69 C33 67 34 65 36 63 Z"/>
<circle cx="86" cy="83.8" r="2.4"/>
<circle cx="27" cy="73" r="1.3"/><circle cx="78" cy="80" r="1"/><circle cx="92" cy="70" r="1.1"/><circle cx="24" cy="70" r="1"/>
</g>
<g fill="#e8204e">
<path d="M43.2 1 L45 0.8 L50.3 29 L48.5 29.3 Z"/>
<path d="M48 29 C51 30 53.6 33 53 37 C52.5 40 50 43 44 43 C41 43 40.5 41 41 39 C42 35 44.5 30 48 29 Z"/>
<circle cx="65.4" cy="3.9" r="2.2"/><circle cx="72.5" cy="8.6" r="2"/>
<path d="M59.3 11.8 L60.5 11.6 L63.5 23.6 L62.3 23.8 Z"/>
<path d="M70 29 L72 29.5 L76 36 L86 42.5 L85 43.2 L73 38.5 L69.5 33 Z"/>
<circle cx="63.3" cy="28" r="1.3"/>
<circle cx="72.9" cy="84.2" r="2.2"/><circle cx="65.5" cy="78.4" r="1.2"/><circle cx="83.7" cy="71" r="1.4"/>
<path d="M34 62 L41 61 L41 63.5 L34 64.5 Z"/>
<circle cx="33" cy="31" r="1"/><circle cx="30.5" cy="36" r="0.9"/>
</g>
<text x="20.3" y="56.3" font-family="Liberation Sans" font-size="9.6" font-weight="bold" fill="#e8204e" letter-spacing="0.3">小刀娱乐</text>
<text x="67.6" y="56.3" font-family="Liberation Sans" font-size="9.6" font-weight="bold" fill="#5aa83a" letter-spacing="0.6">乐于分享</text>
</g></svg>
<div class="t" style="left:654px;top:451px;font-size:11.5px;color:#dcdcdc">www.x6d</div>
<div style="left:696px;top:412px;width:1px;height:111px;background:#3b3b3b"></div>
<svg style="left:523px;top:525px;" width="175" height="24" viewBox="0 0 175 24">
<path d="M5.8 11 V17.6 H16.8 V8.5 L14 5.4 H11.5" fill="none" stroke="#dcdcdc" stroke-width="1.6"/>
<path d="M4.5 7.7 H11 M7.7 4.5 V11" stroke="#dcdcdc" stroke-width="1.9"/>
<path d="M25.8 4 H31 L32.5 6 H40 V17.6 H25.8 Z" fill="#dcdcdc"/>
<path d="M30 13.3 H38.7 M34.35 9 V17.6" stroke="#3b3b3b" stroke-width="1.9"/>
<path d="M49 15 L55 9 L61 15" fill="none" stroke="#666" stroke-width="1.8"/>
<path d="M71 9 L77 15 L83 9" fill="none" stroke="#666" stroke-width="1.8"/>
<rect x="92.5" y="6.5" width="7.5" height="6.5" fill="none" stroke="#dcdcdc" stroke-width="1.4"/>
<path d="M101.5 10 H104.5 V15.5 H96.5 V14" fill="none" stroke="#aaa" stroke-width="1.4"/>
<path d="M114.5 6.3 H120.5 L119 8.3 H113 Z M114 9.8 H120 L118.5 12 H112.5 Z M113.5 13.5 H119.5 L118 15.7 H112 Z" fill="#dcdcdc"/>
<path d="M125 5.5 V15 M122 12.5 L125 16 L128 12.5" fill="none" stroke="#dcdcdc" stroke-width="1.5"/>
<path d="M137.5 4.5 H144.5 V9 C144.5 11.5 142.5 12.5 141 12.5 C139.5 12.5 137.5 11.5 137.5 9 Z" fill="#dcdcdc"/>
<circle cx="139.6" cy="7.6" r="0.7" fill="#3b3b3b"/><circle cx="142.4" cy="7.6" r="0.7" fill="#3b3b3b"/>
<path d="M138 12.5 L135 16.8 H146 L149 12.5 H144 L141 14 L138.5 12.5 Z" fill="#dcdcdc"/>
<rect x="156" y="4" width="14" height="14" rx="1.5" fill="#dcdcdc"/><path d="M159 7 L167 15 M167 7 L159 15" stroke="#3b3b3b" stroke-width="2.2"/>
</svg>
<svg style="left:516px;top:291px;" width="5" height="16" viewBox="0 0 5 16"><circle cx="2.5" cy="3" r="1.2" fill="#999"/><circle cx="2.5" cy="7.5" r="1.2" fill="#999"/><circle cx="2.5" cy="12" r="1.2" fill="#999"/></svg>
</body></html>
